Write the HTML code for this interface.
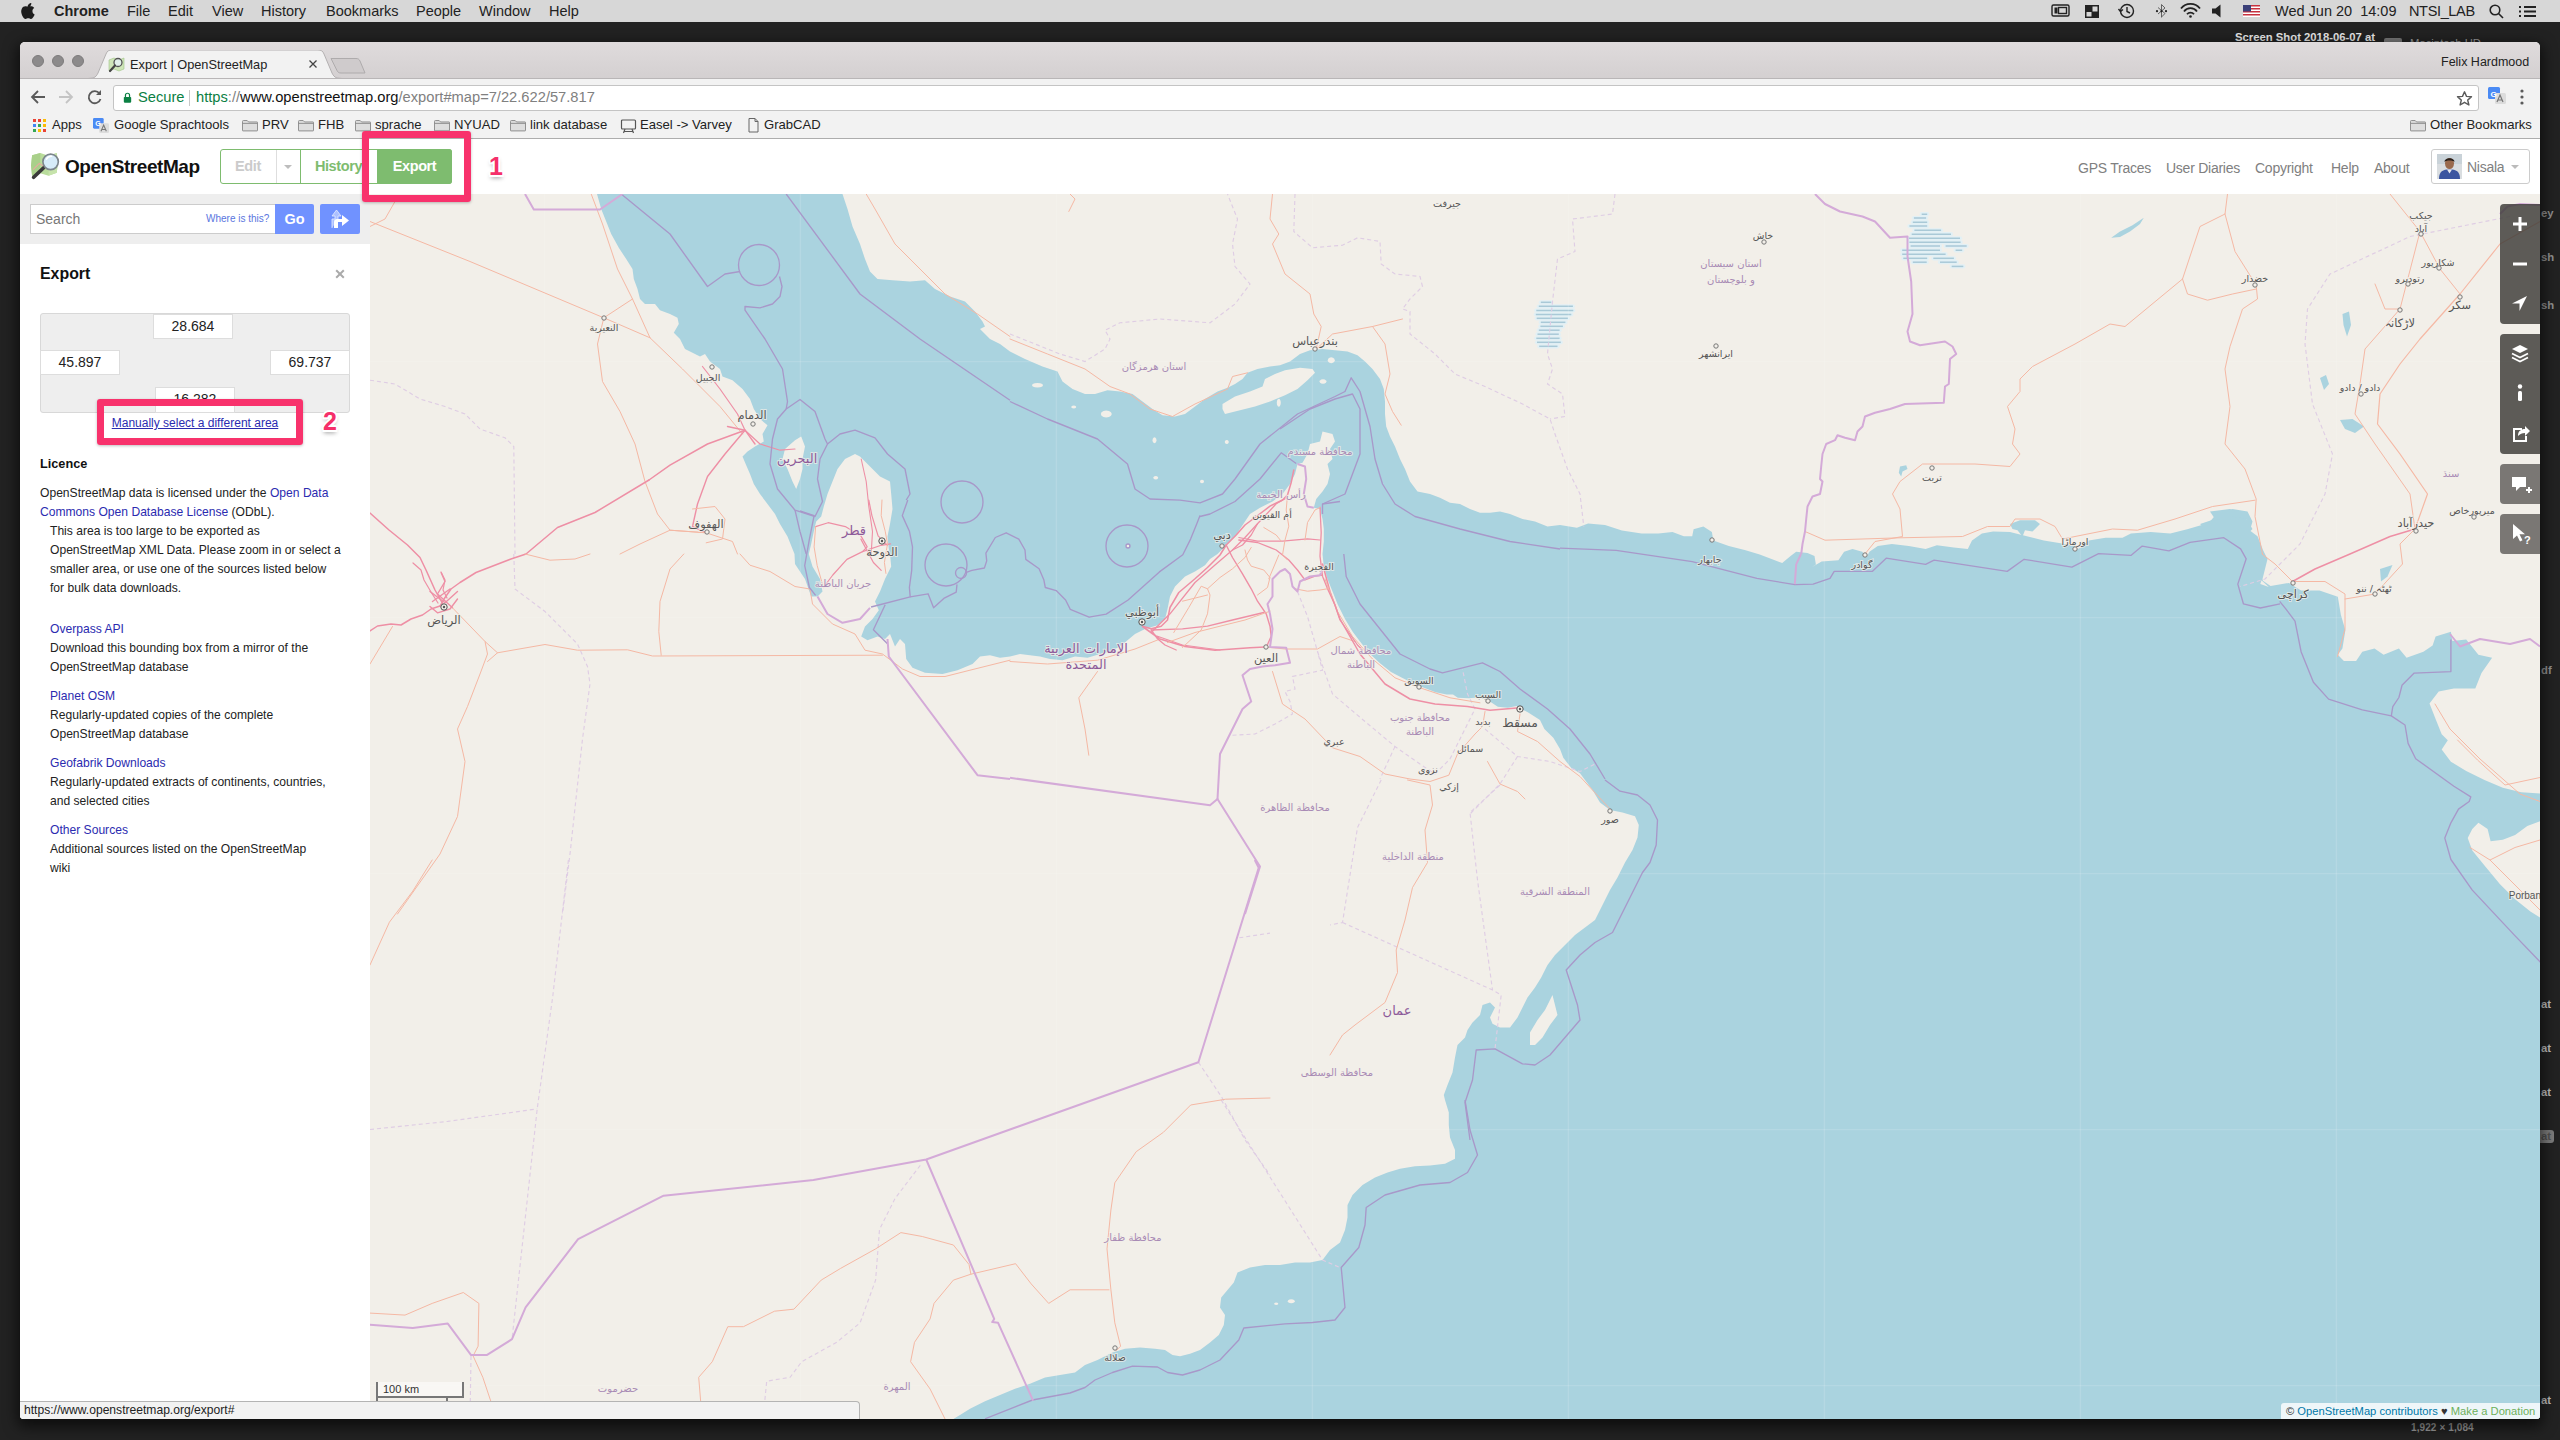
<!DOCTYPE html>
<html lang="en">
<head>
<meta charset="utf-8">
<title>Export | OpenStreetMap</title>
<style>
*{box-sizing:border-box}
html,body{margin:0;padding:0}
body{width:2560px;height:1440px;background:#222222;position:relative;overflow:hidden;font-family:"Liberation Sans","DejaVu Sans",sans-serif;color:#222;-webkit-font-smoothing:antialiased}
.abs{position:absolute}
#menubar{left:0;top:0;width:2560px;height:22px;background:#d7d7d7;font-size:14.5px;line-height:22px;color:#222}
#menubar span{position:absolute;top:0;white-space:nowrap}
#desk span{position:absolute;color:#e8e8e8;font-weight:bold;font-size:11.3px;white-space:nowrap}
#win{left:20px;top:42px;width:2520px;height:1377px;background:#fff;border-radius:5px 5px 4px 4px;overflow:hidden;box-shadow:0 5px 14px 3px rgba(0,0,0,.6)}
#tabstrip{left:0;top:0;width:2520px;height:36px;background:linear-gradient(#dfdbdc,#d4d0d1)}
#toolbar{left:0;top:36px;width:2520px;height:34px;background:#f2f2f2;border-top:1px solid #b9b6b7}
#bmbar{left:0;top:70px;width:2520px;height:27px;background:#f2f2f2;border-bottom:1px solid #adadad;font-size:13.1px;line-height:26px;color:#222}
#bmbar span{position:absolute;top:0;white-space:nowrap}
.folder{position:absolute;top:7px;width:16px;height:12.500px}
#urlbox{left:93px;top:6px;width:2366px;height:26px;background:#fff;border:1px solid #c4c4c4;border-radius:3px;font-size:14.7px;line-height:23px;white-space:nowrap}
#page{left:0;top:97px;width:2520px;height:1280px;background:#fff}
#osmhead{left:0;top:0;width:2520px;height:55px;background:#fff}
.nav a{position:absolute;top:0;font-size:14px;line-height:59px;color:#808080;white-space:nowrap;letter-spacing:-.25px}
#sidebar{left:0;top:55px;width:350px;height:1225px;background:#fff;font-size:12.1px;line-height:19px;color:#222}
#searchbar{left:0;top:0;width:350px;height:50px;background:#eee}
#map{left:350px;top:55px;width:2170px;height:1225px;overflow:hidden;background:#f2efe9}
.lnk{color:#2b2bb0}
.ctl{position:absolute;left:2130px;width:40px;background:rgba(60,58,55,.82);border-radius:4px 0 0 4px}
.ctl.l{background:rgba(95,93,90,.82)}
.ctl svg{position:absolute;left:0}
.inp{position:absolute;background:#fff;border:1px solid #ddd;height:25px;font-size:14px;line-height:23px;text-align:center;color:#222}
.pinkbox{position:absolute;border:7px solid #f8326c;border-radius:3px;box-shadow:0 1px 3px rgba(0,0,0,.25)}
.pinknum{position:absolute;color:#f5306a;font-weight:bold;font-size:25px;line-height:24px;text-shadow:-1.5px -1.5px 0 #fff,1.5px -1.5px 0 #fff,-1.5px 1.5px 0 #fff,1.5px 1.5px 0 #fff,0 -2px 0 #fff,0 2px 0 #fff,2px 0 0 #fff,-2px 0 0 #fff,0 3px 4px rgba(0,0,0,.4)}
</style>
</head>
<body>
<!-- ===== macOS menu bar ===== -->
<div id="menubar" class="abs">
<svg class="abs" style="left:20px;top:2px" width="15" height="17" viewBox="0 0 15 17"><path d="M10.3 4.1c.7-.8 1.1-1.900 1-3-.9 0-2.100.6-2.800 1.400-.6.700-1.100 1.800-1 2.900 1 .1 2.100-.5 2.800-1.300zM12.400 9c0-2.100 1.700-3.100 1.800-3.100-1-1.400-2.500-1.600-3-1.600-1.300-.1-2.500.7-3.100.7-.7 0-1.700-.7-2.700-.7C3.900 4.300 2.600 5.100 1.900 6.400.400 9 1.500 12.800 3 14.900c.7 1 1.500 2.200 2.600 2.100 1-.0 1.400-.7 2.700-.7 1.200 0 1.600.7 2.700.6 1.100 0 1.800-1 2.500-2.100.8-1.200 1.100-2.300 1.100-2.400 0 0-2.200-.8-2.200-3.400z" fill="#1c1c1c"/></svg>
<span style="left:54px;font-weight:bold">Chrome</span>
<span style="left:127px">File</span><span style="left:168px">Edit</span><span style="left:212px">View</span><span style="left:261px">History</span><span style="left:326px">Bookmarks</span><span style="left:416px">People</span><span style="left:479px">Window</span><span style="left:549px">Help</span>
<!-- right status icons -->
<svg class="abs" style="left:2050px;top:2px" width="200" height="18" viewBox="0 0 200 18" fill="none" stroke="#222" stroke-width="1.4">
<rect x="2" y="3" width="17" height="11" rx="1.5"/><rect x="4.500" y="5.500" width="3" height="6" fill="#222" stroke="none"/><rect x="8.500" y="5.500" width="8" height="6"/>
<rect x="35" y="3" width="14" height="13" fill="#222" stroke="none"/><rect x="42.500" y="4.500" width="5" height="5" fill="#d7d7d7" stroke="none"/><rect x="36.500" y="10" width="5" height="4.500" fill="#d7d7d7" stroke="none"/>
<circle cx="77" cy="9" r="6.500"/><path d="M77 5v4.500l3 1.500"/><path d="M68.500 7l2 2.500 2.500-2" />
<path d="M111.500 2.500v13M108 5.500l7 6-3.500 3.500M108 12l7-6-3.500-3.500" stroke-width=".9" stroke="#555"/><circle cx="107" cy="9.200" r="1.100" fill="#222" stroke="none"/><circle cx="111.500" cy="9.200" r="1.100" fill="#222" stroke="none"/><circle cx="116" cy="9.200" r="1.100" fill="#222" stroke="none"/>
<path d="M131 6.500a12 12 0 0 1 19 0" stroke-width="1.800"/><path d="M134 9.500a8 8 0 0 1 13 0" stroke-width="1.800"/><path d="M137 12.300a4.500 4.500 0 0 1 7 0" stroke-width="1.800"/><circle cx="140.500" cy="14.500" r="1.300" fill="#222" stroke="none"/>
<path d="M162 6.500h3.500l5-4v13l-5-4H162z" fill="#222" stroke="none"/>
</svg>
<svg class="abs" style="left:2243px;top:5px" width="17" height="12" viewBox="0 0 17 12"><rect width="17" height="12" fill="#fff"/><g fill="#c8313e"><rect y="0" width="17" height="1.500"/><rect y="3" width="17" height="1.500"/><rect y="6" width="17" height="1.500"/><rect y="9" width="17" height="1.500"/></g><rect width="8" height="6.500" fill="#3a3f78"/></svg>
<span style="left:2275px">Wed Jun 20&nbsp; 14:09</span><span style="left:2409px;letter-spacing:-.35px">NTSI_LAB</span>
<svg class="abs" style="left:2488px;top:3px" width="60" height="17" viewBox="0 0 60 17" fill="none" stroke="#222" stroke-width="1.600"><circle cx="7" cy="7" r="4.800"/><path d="M10.500 10.500l4.500 4.500"/><path d="M36 4h12M36 8.500h12M36 13h12" stroke-width="2"/><path d="M31 4h2M31 8.500h2M31 13h2" stroke-width="2"/></svg>
</div>

<!-- ===== desktop fragments behind window ===== -->
<div id="desk">
<span style="left:2235px;top:31px">Screen Shot 2018-06-07 at</span>
<span style="left:2410px;top:37px;color:#999;font-weight:normal">Macintosh HD</span>
<div class="abs" style="left:2384px;top:38px;width:18px;height:6px;background:#777;border-radius:2px"></div>
<span style="left:2541px;top:207px;color:#8f8f8f">ey</span><span style="left:2541px;top:251px;color:#8f8f8f">sh</span><span style="left:2541px;top:299px;color:#8f8f8f">sh</span>
<span style="left:2541px;top:664px;color:#8f8f8f">df</span><span style="left:2541px;top:998px;color:#bdbdbd">at</span><span style="left:2541px;top:1042px;color:#bdbdbd">at</span><span style="left:2541px;top:1086px;color:#bdbdbd">at</span><span style="left:2540px;top:1130px;color:#505050;background:#7c7c7c;border-radius:0 3px 3px 0;padding:0 3px 1px 1px">at</span><span style="left:2541px;top:1394px;color:#bdbdbd">at</span>
<span style="left:2411px;top:1422px;color:#9a9a9a;font-size:10px;letter-spacing:.1px">1,922 × 1,084</span>
</div>

<!-- ===== Chrome window ===== -->
<div id="win" class="abs">
 <div id="tabstrip" class="abs">
  <div class="abs" style="left:12px;top:13px;width:12px;height:12px;border-radius:6px;background:#8c8a8b;border:1px solid #7d7b7c"></div>
  <div class="abs" style="left:32px;top:13px;width:12px;height:12px;border-radius:6px;background:#8c8a8b;border:1px solid #7d7b7c"></div>
  <div class="abs" style="left:52px;top:13px;width:12px;height:12px;border-radius:6px;background:#8c8a8b;border:1px solid #7d7b7c"></div>
  <svg class="abs" style="left:68px;top:8px" width="290" height="29" viewBox="0 1 290 29">
   <path d="M0 29.500 L5 29 C8 28 9 26 10 24 L18 5 C19 2 21 1 24 1 L230 1 C233 1 235 2 236 5 L244 24 C245 26 246 28 249 29 L254 29.500 Z" fill="#f2f2f2" stroke="#b3b0b1" stroke-width="1"/>
   <rect x="0" y="29" width="290" height="1" fill="#f2f2f2"/>
   <path d="M243 9.500 L268 9.500 C270 9.500 271 10 272 12 L277 24 L253 24 C251 24 250 23.500 249 21.500 Z" fill="#cfcbcc" stroke="#aeabac" stroke-width="1"/>
  </svg>
  <!-- favicon -->
  <svg class="abs" style="left:88px;top:14px" width="17" height="17" viewBox="0 0 17 17"><path d="M1 4l5-2 5 2 5-2v11l-5 2-5-2-5 2z" fill="#cfe6b8" stroke="#9fc487" stroke-width=".6"/><circle cx="10" cy="6.500" r="4" fill="#e9f3ff" fill-opacity=".7" stroke="#555" stroke-width="1.300"/><path d="M7 9.500l-5 5.500" stroke="#444" stroke-width="2.200" stroke-linecap="round"/></svg>
  <div class="abs" style="left:110px;top:15px;font-size:12.750px;line-height:16px;color:#222;white-space:nowrap">Export | OpenStreetMap</div>
  <svg class="abs" style="left:288px;top:17px" width="10" height="10" viewBox="0 0 10 10"><path d="M1.500 1.500l7 7M8.500 1.500l-7 7" stroke="#444" stroke-width="1.300"/></svg>
  <div class="abs" style="left:2421px;top:12px;font-size:12.500px;line-height:16px;color:#222;white-space:nowrap">Felix Hardmood</div>
 </div>
 <div id="toolbar" class="abs">
  <svg class="abs" style="left:8px;top:8px" width="80" height="20" viewBox="0 0 80 20" fill="none" stroke-width="1.800">
   <path d="M17 10H4M10 4l-6 6 6 6" stroke="#5a5a5a"/>
   <path d="M31 10h13M38 4l6 6-6 6" stroke="#c4c4c4"/>
   <path d="M71.500 6.500A6 6 0 1 0 72.500 12" stroke="#5a5a5a"/><path d="M73 3v5h-5z" fill="#5a5a5a" stroke="none"/>
  </svg>
  <div id="urlbox" class="abs">
   <svg class="abs" style="left:9px;top:6px" width="9" height="11.500" viewBox="0 0 11 14"><rect x="1" y="6" width="9" height="7" rx="1" fill="#0b8043"/><path d="M3 6V4a2.500 2.500 0 0 1 5 0v2" fill="none" stroke="#0b8043" stroke-width="1.500"/></svg>
   <span class="abs" style="left:24px;top:0;color:#0b8043">Secure</span>
   <div class="abs" style="left:75px;top:4px;width:1px;height:16px;background:#c8c8c8"></div>
   <span class="abs" style="left:82px;top:0"><span style="color:#0b8043">https</span><span style="color:#808080">://</span><span style="color:#111">www.openstreetmap.org</span><span style="color:#808080">/export#map=7/22.622/57.817</span></span>
   <svg class="abs" style="left:2342px;top:4px" width="17" height="17" viewBox="0 0 17 17"><path d="M8.500 1.800l2 4.600 5 .4-3.800 3.300 1.200 4.900-4.400-2.700-4.400 2.700 1.200-4.900L1.500 6.800l5-.4z" fill="none" stroke="#5a5a5a" stroke-width="1.400" stroke-linejoin="round"/></svg>
  </div>
  <svg class="abs" style="left:2468px;top:8px" width="18" height="18" viewBox="0 0 18 18"><rect x="0" y="0" width="12" height="12" rx="1.500" fill="#4a8af4"/><rect x="7" y="6" width="11" height="11" rx="1.500" fill="#dcdcdc"/><path d="M9 15l3-7 3 7M10 13h4" stroke="#777" fill="none" stroke-width="1.200"/><text x="2.500" y="9.500" font-size="8" font-weight="bold" fill="#fff" font-family="'Liberation Sans',sans-serif">G</text></svg>
  <svg class="abs" style="left:2499px;top:9px" width="6" height="18" viewBox="0 0 6 18"><circle cx="3" cy="3" r="1.600" fill="#5a5a5a"/><circle cx="3" cy="9" r="1.600" fill="#5a5a5a"/><circle cx="3" cy="15" r="1.600" fill="#5a5a5a"/></svg>
 </div>
 <div id="bmbar" class="abs">
  <svg class="abs" style="left:13px;top:7px" width="14" height="14" viewBox="0 0 14 14"><g><rect x="0" y="0" width="3" height="3" fill="#ea4335"/><rect x="5" y="0" width="3" height="3" fill="#ea4335"/><rect x="10" y="0" width="3" height="3" fill="#fbbc05"/><rect x="0" y="5" width="3" height="3" fill="#4285f4"/><rect x="5" y="5" width="3" height="3" fill="#34a853"/><rect x="10" y="5" width="3" height="3" fill="#fbbc05"/><rect x="0" y="10" width="3" height="3" fill="#34a853"/><rect x="5" y="10" width="3" height="3" fill="#fbbc05"/><rect x="10" y="10" width="3" height="3" fill="#ea4335"/></g></svg>
  <span style="left:32px">Apps</span>
  <svg class="abs" style="left:73px;top:6px" width="16" height="16" viewBox="0 0 18 18"><rect x="0" y="0" width="12" height="12" rx="1.500" fill="#4a8af4"/><rect x="7" y="6" width="11" height="11" rx="1.500" fill="#dcdcdc"/><path d="M9 15l3-7 3 7M10 13h4" stroke="#777" fill="none" stroke-width="1.200"/><text x="2.500" y="9.500" font-size="8" font-weight="bold" fill="#fff" font-family="'Liberation Sans',sans-serif">G</text></svg>
  <span style="left:94px">Google Sprachtools</span>
  <svg class="folder" style="left:222px" viewBox="0 0 17 13"><path d="M.5 2.500a1 1 0 0 1 1-1h4l1.500 1.500h9a.5.5 0 0 1 .5.500V12a.5.5 0 0 1-.5.500h-15a.5.500 0 0 1-.5-.5z" fill="#dedede" stroke="#8a8a8a"/><path d="M.5 4.500h16" stroke="#8a8a8a"/></svg><span style="left:242px">PRV</span>
  <svg class="folder" style="left:278px" viewBox="0 0 17 13"><path d="M.5 2.500a1 1 0 0 1 1-1h4l1.500 1.500h9a.5.5 0 0 1 .5.500V12a.5.5 0 0 1-.5.500h-15a.5.500 0 0 1-.5-.5z" fill="#dedede" stroke="#8a8a8a"/><path d="M.5 4.500h16" stroke="#8a8a8a"/></svg><span style="left:298px">FHB</span>
  <svg class="folder" style="left:335px" viewBox="0 0 17 13"><path d="M.5 2.500a1 1 0 0 1 1-1h4l1.500 1.500h9a.5.5 0 0 1 .5.500V12a.5.5 0 0 1-.5.500h-15a.5.500 0 0 1-.5-.5z" fill="#dedede" stroke="#8a8a8a"/><path d="M.5 4.500h16" stroke="#8a8a8a"/></svg><span style="left:355px">sprache</span>
  <svg class="folder" style="left:414px" viewBox="0 0 17 13"><path d="M.5 2.500a1 1 0 0 1 1-1h4l1.500 1.500h9a.5.5 0 0 1 .5.500V12a.5.5 0 0 1-.5.500h-15a.5.500 0 0 1-.5-.5z" fill="#dedede" stroke="#8a8a8a"/><path d="M.5 4.500h16" stroke="#8a8a8a"/></svg><span style="left:434px">NYUAD</span>
  <svg class="folder" style="left:490px" viewBox="0 0 17 13"><path d="M.5 2.500a1 1 0 0 1 1-1h4l1.500 1.500h9a.5.5 0 0 1 .5.500V12a.5.5 0 0 1-.5.500h-15a.5.500 0 0 1-.5-.5z" fill="#dedede" stroke="#8a8a8a"/><path d="M.5 4.500h16" stroke="#8a8a8a"/></svg><span style="left:510px">link database</span>
  <svg class="abs" style="left:600px;top:6px" width="17" height="16" viewBox="0 0 17 16" fill="none" stroke="#555" stroke-width="1.200"><rect x="1.500" y="2" width="14" height="9" rx="1"/><path d="M5 11l-1.500 4M12 11l1.500 4M4 13.500h9"/></svg><span style="left:620px">Easel -&gt; Varvey</span>
  <svg class="abs" style="left:728px;top:6px" width="11" height="15" viewBox="0 0 11 15" fill="none" stroke="#666" stroke-width="1"><path d="M1 .5h6l3 3v10.500h-9z"/><path d="M7 .5v3h3"/></svg><span style="left:744px">GrabCAD</span>
  <svg class="folder" style="left:2390px" viewBox="0 0 17 13"><path d="M.5 2.500a1 1 0 0 1 1-1h4l1.500 1.500h9a.5.5 0 0 1 .5.500V12a.5.5 0 0 1-.5.500h-15a.5.500 0 0 1-.5-.5z" fill="#dedede" stroke="#8a8a8a"/><path d="M.5 4.500h16" stroke="#8a8a8a"/></svg><span style="left:2410px">Other Bookmarks</span>
 </div>

 <!-- ===== page ===== -->
 <div id="page" class="abs">
  <div id="osmhead" class="abs">
   <svg class="abs" style="left:9px;top:11px" width="35" height="35" viewBox="0 0 34 34"><path d="M3 5l8-2 8 2.500 8-2.500 1 9-1 10-8 3-8-2.500-8 2.500-1-10z" fill="#b9dc9c"/><path d="M3 5l8-2v19.500l-8 2.500-1-10z" fill="#a9d08a"/><path d="M19 5.500l8-2.500 1 9-1 10-8 3z" fill="#c6e3ab"/><path d="M4 19l6-6 7 5 9-9" stroke="#e9a9a0" stroke-width="1" fill="none"/><path d="M14 17.500l-9.500 9" stroke="#3a3a3a" stroke-width="3.600" stroke-linecap="round"/><circle cx="21" cy="11.500" r="7.500" fill="#d6ebf8" stroke="#7d868c" stroke-width="1.600"/><path d="M17 9a5 5 0 0 1 5-3" stroke="#fff" stroke-width="1.500" fill="none" stroke-linecap="round"/></svg>
   <div class="abs" style="left:45px;top:16px;font-size:19px;line-height:24px;font-weight:bold;color:#111;letter-spacing:-.45px;white-space:nowrap">OpenStreetMap</div>
   <div class="abs" style="left:200px;top:10px;width:232px;height:35px;border:1px solid #7ebc6f;border-radius:3px;background:#fff"></div>
   <div class="abs" style="left:256px;top:10px;width:1px;height:33px;margin-top:1px;background:#dedede"></div>
   <div class="abs" style="left:280px;top:10px;width:1px;height:35px;background:#7ebc6f"></div>
   <div class="abs" style="left:357px;top:10px;width:75px;height:35px;background:#7ebc6f;border-radius:0 3px 3px 0"></div>
   <div class="abs" style="left:200px;top:10px;width:56px;height:35px;line-height:35px;text-align:center;font-size:14.500px;font-weight:bold;color:#cbcbcb;letter-spacing:-.4px">Edit</div>
   <div class="abs" style="left:264px;top:26px;width:0;height:0;border-left:4px solid transparent;border-right:4px solid transparent;border-top:4px solid #bdbdbd"></div>
   <div class="abs" style="left:280px;top:10px;width:77px;height:35px;line-height:35px;text-align:center;font-size:14.500px;font-weight:bold;color:#7ebc6f;letter-spacing:-.4px">History</div>
   <div class="abs" style="left:357px;top:10px;width:75px;height:35px;line-height:35px;text-align:center;font-size:14.500px;font-weight:bold;color:#fff;letter-spacing:-.4px">Export</div>
   <div class="nav">
    <a style="left:2058px">GPS Traces</a><a style="left:2146px">User Diaries</a><a style="left:2235px">Copyright</a><a style="left:2311px">Help</a><a style="left:2354px">About</a>
   </div>
   <div class="abs" style="left:2411px;top:10px;width:99px;height:35px;border:1px solid #ccc;border-radius:3px"></div>
   <svg class="abs" style="left:2417px;top:15px" width="25" height="25" viewBox="0 0 25 25"><rect width="25" height="25" fill="#d9dde0"/><rect x="0" y="0" width="25" height="10" fill="#c9d2d8"/><ellipse cx="12.500" cy="9.500" rx="4.500" ry="5.500" fill="#9a6a4d"/><path d="M7.500 8c0-5 10-5 10 0-1-2-9-2-10 0z" fill="#2a211c"/><path d="M2 25c0-8 4-9.500 10.500-9.500S23 17 23 25z" fill="#3b55a0"/><path d="M10 15.500l2.500 4 2.500-4z" fill="#e8e8ee"/></svg>
   <div class="abs" style="left:2447px;top:10px;height:35px;line-height:37px;font-size:14px;letter-spacing:-.25px;color:#808080">Nisala</div>
   <div class="abs" style="left:2491px;top:26px;width:0;height:0;border-left:4px solid transparent;border-right:4px solid transparent;border-top:4px solid #bbb"></div>
  </div>

  <div id="sidebar" class="abs">
   <div id="searchbar" class="abs">
    <div class="abs" style="left:10px;top:10px;width:246px;height:30px;background:#fff;border:1px solid #ccc;border-right:0"></div>
    <div class="abs" style="left:16px;top:10px;line-height:30px;font-size:14px;color:#777">Search</div>
    <div class="abs" style="left:186px;top:10px;line-height:30px;font-size:10px;color:#5a76e0;white-space:nowrap">Where is this?</div>
    <div class="abs" style="left:255px;top:10px;width:39px;height:30px;background:#7092ff;color:#fff;font-weight:bold;font-size:14.500px;line-height:30px;text-align:center;border-radius:0 2px 2px 0">Go</div>
    <div class="abs" style="left:300px;top:10px;width:40px;height:30px;background:#7092ff;border-radius:2px"></div>
    <svg class="abs" style="left:309px;top:14px" width="22" height="21" viewBox="0 0 22 21"><path d="M3 20v-9h3V8L3 8l4.500-6L12 8H9v3" fill="#dfe6ff" fill-opacity=".55" stroke="#e6ecff" stroke-width="1" stroke-opacity=".8"/><path d="M5 20v-6c0-2 1-3 3-3h5V7l7 5.500-7 5.500v-4H9v6z" fill="#fff"/></svg>
   </div>
   <div class="abs" style="left:20px;top:69px;font-size:15.900px;line-height:22px;font-weight:bold;color:#111">Export</div>
   <svg class="abs" style="left:315px;top:75px" width="10" height="10" viewBox="0 0 10 10"><path d="M1.200 1.200l7.600 7.600M8.800 1.200l-7.600 7.600" stroke="#aaa" stroke-width="2"/></svg>
   <div class="abs" style="left:20px;top:119px;width:310px;height:100px;background:#eee;border:1px solid #d8d8d8;border-radius:3px"></div>
   <div class="inp" style="left:133px;top:120px;width:80px">28.684</div>
   <div class="inp" style="left:20px;top:156px;width:80px">45.897</div>
   <div class="inp" style="left:250px;top:156px;width:80px">69.737</div>
   <div class="inp" style="left:135px;top:193px;width:80px;height:26px">16.282</div>
   <div class="abs" style="left:20px;top:220px;width:310px;text-align:center;font-size:12px;line-height:19px"><span class="lnk" style="text-decoration:underline;position:relative;left:0">Manually select a different area</span></div>
   <div class="abs" style="left:20px;top:261px;font-size:12.700px;font-weight:bold;line-height:18px;color:#111">Licence</div>
   <div class="abs" style="left:20px;top:290px;width:320px;white-space:nowrap">OpenStreetMap data is licensed under the <span class="lnk">Open Data</span><br><span class="lnk">Commons Open Database License</span> (ODbL).</div>
   <div class="abs" style="left:30px;top:328px;width:310px;white-space:nowrap">This area is too large to be exported as<br>OpenStreetMap XML Data. Please zoom in or select a<br>smaller area, or use one of the sources listed below<br>for bulk data downloads.</div>
   <div class="abs" style="left:30px;top:426px;white-space:nowrap"><span class="lnk">Overpass API</span><br>Download this bounding box from a mirror of the<br>OpenStreetMap database</div>
   <div class="abs" style="left:30px;top:493px;white-space:nowrap"><span class="lnk">Planet OSM</span><br>Regularly-updated copies of the complete<br>OpenStreetMap database</div>
   <div class="abs" style="left:30px;top:560px;white-space:nowrap"><span class="lnk">Geofabrik Downloads</span><br>Regularly-updated extracts of continents, countries,<br>and selected cities</div>
   <div class="abs" style="left:30px;top:627px;white-space:nowrap"><span class="lnk">Other Sources</span><br>Additional sources listed on the OpenStreetMap<br>wiki</div>
  </div>

  <div id="map" class="abs">
<svg width="2170" height="1226" viewBox="370 194 2170 1226" style="position:absolute;left:0;top:0;display:block">
<rect x="370" y="194" width="2170" height="1226" fill="#f2efe9"/>
<path d="M597.0 194.0 L601.2 209.0 L606.2 221.5 L611.2 234.0 L618.8 247.8 L626.2 259.0 L632.5 269.0 L633.8 279.0 L637.5 289.0 L640.0 299.0 L645.0 304.0 L655.0 304.0 L660.0 310.2 L670.0 314.0 L677.5 317.8 L678.8 324.0 L673.8 332.8 L680.0 339.0 L685.0 349.0 L695.0 354.0 L700.0 356.5 L705.0 354.0 L710.0 361.5 L720.0 369.0 L722.5 376.5 L732.5 380.2 L742.5 389.0 L750.0 399.0 L753.8 409.0 L760.0 419.0 L767.5 425.2 L762.5 434.0 L763.8 441.5 L755.0 446.5 L747.5 451.5 L742.5 456.5 L746.2 465.2 L750.0 474.0 L753.8 484.0 L760.0 494.0 L767.5 504.0 L775.0 514.0 L780.0 524.0 L787.5 536.5 L792.5 549.0 L794.5 554.0 L795.0 564.0 L805.0 579.0 L811.2 596.5 L817.5 596.5 L822.5 591.5 L820.0 579.0 L812.5 566.5 L808.8 554.0 L811.2 544.0 L813.8 531.5 L816.2 521.5 L821.2 516.5 L823.8 506.5 L827.5 494.0 L832.5 481.5 L837.5 469.0 L845.0 459.0 L855.0 454.0 L860.0 456.5 L870.0 466.5 L880.0 476.5 L890.0 481.5 L891.2 494.0 L892.5 509.0 L890.0 524.0 L887.5 536.5 L888.8 549.0 L890.0 554.0 L891.2 566.5 L885.0 579.0 L880.0 591.5 L875.0 601.5 L878.8 610.2 L872.5 619.0 L865.0 626.5 L861.2 636.5 L867.5 640.2 L877.5 636.5 L885.0 639.0 L890.0 634.0 L895.0 646.5 L900.0 639.0 L905.0 644.0 L906.2 659.0 L912.5 667.8 L925.0 672.8 L942.5 674.0 L957.5 670.2 L972.5 664.0 L980.0 656.5 L990.0 655.2 L1000.0 657.8 L1010.0 656.5 L1020.0 654.0 L1030.0 655.2 L1040.0 656.5 L1050.0 659.0 L1062.5 660.2 L1075.0 656.5 L1087.5 657.8 L1100.0 654.0 L1110.0 651.5 L1120.0 646.5 L1127.5 640.2 L1135.0 634.0 L1145.0 629.0 L1157.5 625.2 L1165.0 619.0 L1167.5 609.0 L1170.0 596.5 L1175.0 586.5 L1185.0 576.5 L1195.0 571.5 L1205.0 565.2 L1210.0 559.0 L1217.5 554.0 L1225.0 546.5 L1230.0 541.5 L1235.0 536.5 L1240.0 529.0 L1245.0 521.5 L1250.0 514.0 L1260.0 507.8 L1272.5 501.5 L1282.5 494.0 L1290.0 484.0 L1295.0 474.0 L1297.5 464.0 L1302.5 462.8 L1307.5 454.0 L1310.0 444.0 L1320.0 441.5 L1322.5 431.5 L1332.5 434.0 L1335.0 441.5 L1330.0 449.0 L1332.5 459.0 L1327.5 464.0 L1330.0 474.0 L1327.5 484.0 L1322.5 491.5 L1316.2 499.0 L1313.8 507.8 L1320.0 509.0 L1322.5 519.0 L1323.8 529.0 L1323.8 541.5 L1322.5 554.0 L1323.8 566.5 L1327.5 579.0 L1332.5 591.5 L1337.5 604.0 L1345.0 619.0 L1352.5 631.5 L1360.0 641.5 L1370.0 654.0 L1380.0 663.3 L1391.0 672.0 L1402.0 677.8 L1413.0 683.3 L1424.0 687.8 L1435.6 692.2 L1446.7 694.4 L1453.0 694.4 L1457.8 697.8 L1469.0 698.3 L1480.0 697.2 L1491.0 702.2 L1497.8 706.7 L1507.8 707.8 L1516.7 706.0 L1521.1 708.9 L1527.8 712.2 L1540.0 720.0 L1544.4 728.9 L1553.3 737.8 L1560.0 748.9 L1563.3 757.8 L1571.1 767.8 L1580.0 773.3 L1585.0 780.0 L1592.5 790.0 L1600.0 802.5 L1610.0 810.0 L1622.5 812.5 L1635.0 816.2 L1638.8 825.0 L1637.5 837.5 L1632.5 850.0 L1625.0 862.5 L1617.5 877.5 L1610.0 890.0 L1602.5 905.0 L1595.0 920.0 L1585.0 927.5 L1575.0 935.0 L1565.0 945.0 L1555.0 955.0 L1547.5 965.0 L1541.2 977.5 L1535.0 987.5 L1527.5 997.5 L1522.5 1007.5 L1517.5 1017.5 L1510.0 1027.5 L1500.0 1027.5 L1492.5 1023.8 L1490.0 1017.5 L1495.0 1007.5 L1490.0 1002.5 L1482.5 1005.0 L1480.0 1015.0 L1472.5 1022.5 L1467.5 1030.0 L1465.0 1037.5 L1457.5 1045.0 L1455.0 1057.5 L1452.5 1072.5 L1447.5 1085.0 L1443.8 1095.0 L1445.0 1100.0 L1448.8 1112.5 L1448.8 1125.0 L1450.0 1137.5 L1455.0 1150.0 L1455.0 1158.8 L1445.0 1163.8 L1430.0 1165.5 L1415.0 1166.2 L1400.0 1168.8 L1387.5 1172.5 L1375.0 1177.5 L1362.5 1185.0 L1352.5 1195.0 L1347.5 1205.0 L1347.5 1217.5 L1345.0 1230.0 L1340.0 1242.5 L1330.0 1250.0 L1322.5 1260.0 L1310.0 1262.5 L1295.0 1262.5 L1280.0 1265.0 L1265.0 1265.0 L1250.0 1267.5 L1237.5 1272.5 L1233.8 1282.5 L1227.5 1290.0 L1221.2 1297.5 L1220.0 1307.5 L1225.0 1315.0 L1223.8 1325.0 L1218.8 1335.0 L1210.0 1342.5 L1200.0 1350.0 L1190.0 1353.8 L1180.0 1356.2 L1172.5 1355.0 L1165.0 1350.0 L1155.0 1348.8 L1140.0 1347.5 L1125.0 1348.8 L1112.5 1352.5 L1097.5 1360.0 L1085.0 1365.0 L1075.0 1372.5 L1060.0 1375.0 L1045.0 1377.5 L1030.0 1383.8 L1015.0 1388.8 L1000.0 1395.0 L985.0 1401.2 L970.0 1408.8 L960.0 1415.0 L953.8 1418.8 L954.0 1420.0 L2542.0 1420.0 L2542.6 919.1 L2530.4 911.5 L2515.1 899.3 L2499.8 884.0 L2484.5 865.6 L2472.3 850.4 L2467.7 838.1 L2472.3 829.0 L2478.4 822.8 L2487.6 829.0 L2490.6 841.2 L2502.8 839.7 L2515.1 835.1 L2527.3 825.9 L2542.6 820.4 L2542.6 793.8 L2521.2 792.3 L2502.8 787.7 L2484.5 780.1 L2466.2 770.9 L2450.9 761.7 L2441.7 749.5 L2447.8 740.3 L2441.7 734.2 L2435.6 718.9 L2429.5 703.6 L2438.7 691.4 L2453.9 688.4 L2475.3 688.4 L2481.5 673.1 L2492.1 657.8 L2478.4 654.7 L2466.2 639.5 L2452.4 641.0 L2450.9 631.8 L2435.6 636.4 L2432.6 645.6 L2423.4 651.7 L2406.6 657.8 L2398.9 648.6 L2383.6 654.7 L2374.5 648.6 L2362.3 651.7 L2356.1 660.9 L2343.9 660.9 L2337.8 654.7 L2342.4 648.6 L2345.4 630.3 L2340.9 615.0 L2337.8 596.7 L2319.5 590.6 L2301.1 590.6 L2288.9 582.9 L2270.6 586.0 L2262.9 580.8 L2262.5 579.0 L2267.5 559.0 L2260.0 544.0 L2247.5 534.0 L2252.5 529.0 L2245.0 516.5 L2230.0 509.0 L2210.0 511.5 L2215.0 519.0 L2200.0 524.0 L2268.8 586.9 L2260.3 584.1 L2263.1 575.6 L2265.9 564.4 L2263.1 550.3 L2257.5 536.2 L2246.2 527.8 L2229.4 522.2 L2206.9 523.6 L2187.2 529.2 L2170.3 533.4 L2150.6 532.0 L2130.9 533.4 L2122.5 537.7 L2105.6 537.7 L2088.8 540.5 L2080.3 547.5 L2070.5 553.7 L2077.5 551.7 L2074.7 546.1 L2060.6 543.3 L2043.8 540.5 L2026.9 536.2 L2010.0 532.0 L1993.1 531.5 L1981.9 533.4 L1972.0 540.5 L1967.8 548.9 L1953.8 547.5 L1936.9 545.2 L1925.6 548.9 L1908.8 546.1 L1891.9 544.1 L1877.8 546.1 L1869.4 551.7 L1866.6 557.3 L1862.3 551.7 L1852.5 548.9 L1844.1 551.7 L1838.4 560.2 L1821.6 561.6 L1811.7 567.2 L1815.9 564.4 L1814.5 555.9 L1807.5 553.1 L1796.2 551.7 L1790.6 555.9 L1782.2 563.0 L1770.9 558.8 L1759.7 554.5 L1745.6 550.3 L1728.8 546.1 L1713.3 540.5 L1711.9 532.0 L1703.4 526.4 L1693.6 529.2 L1692.2 536.2 L1683.8 536.2 L1672.5 532.0 L1658.4 533.4 L1641.6 533.4 L1621.9 530.6 L1605.0 525.0 L1588.1 523.6 L1576.9 527.8 L1560.0 525.0 L1547.5 526.5 L1535.0 521.5 L1522.5 519.0 L1510.0 514.0 L1500.0 511.5 L1490.0 512.8 L1480.0 512.8 L1470.0 509.0 L1460.0 504.0 L1450.0 502.8 L1440.0 497.8 L1430.0 494.0 L1417.5 491.5 L1410.0 481.5 L1405.0 469.0 L1400.0 459.0 L1395.0 446.5 L1390.0 436.5 L1386.2 426.5 L1385.0 414.0 L1385.0 401.5 L1383.8 389.0 L1380.0 379.0 L1372.5 369.0 L1365.0 361.5 L1357.5 355.2 L1347.5 351.5 L1335.0 350.2 L1322.5 349.0 L1310.0 350.2 L1300.0 354.0 L1290.0 361.5 L1280.0 365.2 L1270.0 366.5 L1257.5 369.0 L1247.5 372.8 L1242.5 379.0 L1235.0 384.0 L1227.5 387.8 L1217.5 391.5 L1205.0 399.0 L1195.0 406.5 L1185.0 414.0 L1175.0 416.5 L1162.5 415.2 L1152.5 409.0 L1142.5 401.5 L1132.5 394.0 L1120.0 391.5 L1107.5 390.2 L1095.0 394.0 L1085.0 394.0 L1072.5 389.0 L1062.5 381.5 L1057.5 371.5 L1042.5 366.5 L1025.0 359.0 L1010.0 351.5 L1010.0 351.5 L1000.0 344.0 L990.0 339.0 L980.0 329.0 L985.0 326.5 L982.5 321.5 L975.0 311.5 L965.0 301.5 L950.0 296.5 L935.0 289.0 L925.0 280.2 L910.0 281.5 L892.5 280.2 L877.5 279.0 L870.0 271.5 L865.0 259.0 L860.0 244.0 L852.5 226.5 L847.5 209.0 L842.5 194.0 L840.0 192.0 L596.0 192.0Z" fill="#aad3df"/>
<path d="M785.0 449.0 L795.0 440.2 L801.2 436.5 L805.0 446.5 L802.5 459.0 L802.5 469.0 L800.0 479.0 L796.2 489.0 L792.5 481.5 L787.5 469.0 L782.5 459.0Z" fill="#f2efe9"/>
<path d="M1222.5 404.0 L1235.0 396.5 L1250.0 391.5 L1262.5 386.5 L1265.0 379.0 L1275.0 374.0 L1285.0 370.2 L1300.0 367.8 L1312.5 369.0 L1315.0 372.8 L1307.5 380.2 L1297.5 389.0 L1285.0 395.2 L1270.0 401.5 L1255.0 406.5 L1240.0 410.2 L1225.0 414.0 L1222.5 409.0Z" fill="#f2efe9"/>
<path d="M1552.5 995.0 L1555.0 1005.0 L1557.5 1015.0 L1550.0 1025.0 L1542.5 1037.5 L1535.0 1045.0 L1530.0 1045.0 L1530.0 1032.5 L1537.5 1020.0 L1545.0 1010.0 L1550.0 1000.0Z" fill="#f2efe9"/>
<path d="M1043.0 385.2 L1042.3 386.4 L1040.2 387.2 L1037.5 387.5 L1034.8 387.2 L1032.7 386.4 L1032.0 385.2 L1032.7 384.1 L1034.8 383.3 L1037.5 383.0 L1040.2 383.3 L1042.3 384.1Z" fill="#f2efe9"/>
<path d="M1111.8 414.0 L1111.0 415.8 L1109.0 417.0 L1106.2 417.5 L1103.5 417.0 L1101.5 415.8 L1100.8 414.0 L1101.5 412.2 L1103.5 411.0 L1106.2 410.5 L1109.0 411.0 L1111.0 412.2Z" fill="#f2efe9"/>
<path d="M1334.8 360.2 L1334.3 361.8 L1333.0 362.8 L1331.2 363.2 L1329.5 362.8 L1328.2 361.8 L1327.8 360.2 L1328.2 358.8 L1329.5 357.7 L1331.2 357.2 L1333.0 357.7 L1334.3 358.8Z" fill="#f2efe9"/>
<path d="M1326.5 381.5 L1326.0 382.6 L1324.8 383.4 L1323.0 383.8 L1321.2 383.4 L1320.0 382.6 L1319.5 381.5 L1320.0 380.4 L1321.2 379.6 L1323.0 379.2 L1324.8 379.6 L1326.0 380.4Z" fill="#f2efe9"/>
<path d="M1156.5 440.2 L1156.2 441.8 L1155.5 442.8 L1154.5 443.2 L1153.5 442.8 L1152.8 441.8 L1152.5 440.2 L1152.8 438.8 L1153.5 437.7 L1154.5 437.2 L1155.5 437.7 L1156.2 438.8Z" fill="#f2efe9"/>
<path d="M1228.8 442.0 L1228.5 443.0 L1227.8 443.7 L1226.8 444.0 L1225.8 443.7 L1225.0 443.0 L1224.8 442.0 L1225.0 441.0 L1225.8 440.3 L1226.8 440.0 L1227.8 440.3 L1228.5 441.0Z" fill="#f2efe9"/>
<path d="M1158.2 477.8 L1157.9 478.6 L1157.0 479.3 L1155.8 479.5 L1154.5 479.3 L1153.6 478.6 L1153.2 477.8 L1153.6 476.9 L1154.5 476.2 L1155.8 476.0 L1157.0 476.2 L1157.9 476.9Z" fill="#f2efe9"/>
<path d="M1204.0 481.5 L1203.7 482.4 L1203.0 483.0 L1202.0 483.2 L1201.0 483.0 L1200.3 482.4 L1200.0 481.5 L1200.3 480.6 L1201.0 480.0 L1202.0 479.8 L1203.0 480.0 L1203.7 480.6Z" fill="#f2efe9"/>
<path d="M1280.8 402.8 L1280.5 404.8 L1279.8 406.2 L1278.8 406.8 L1277.8 406.2 L1277.0 404.8 L1276.8 402.8 L1277.0 400.8 L1277.8 399.3 L1278.8 398.8 L1279.8 399.3 L1280.5 400.8Z" fill="#f2efe9"/>
<path d="M1076.2 407.0 L1075.9 407.8 L1075.0 408.3 L1073.8 408.5 L1072.5 408.3 L1071.6 407.8 L1071.2 407.0 L1071.6 406.2 L1072.5 405.7 L1073.8 405.5 L1075.0 405.7 L1075.9 406.2Z" fill="#f2efe9"/>
<path d="M1129.2 546.0 L1129.0 546.9 L1128.4 547.5 L1127.5 547.8 L1126.6 547.5 L1126.0 546.9 L1125.8 546.0 L1126.0 545.1 L1126.6 544.5 L1127.5 544.2 L1128.4 544.5 L1129.0 545.1Z" fill="#f2efe9"/>
<path d="M1294.8 1301.2 L1294.3 1302.2 L1293.0 1303.0 L1291.2 1303.2 L1289.5 1303.0 L1288.2 1302.2 L1287.8 1301.2 L1288.2 1300.2 L1289.5 1299.5 L1291.2 1299.2 L1293.0 1299.5 L1294.3 1300.2Z" fill="#f2efe9"/>
<path d="M1278.2 1303.8 L1278.0 1304.4 L1277.2 1304.8 L1276.2 1305.0 L1275.2 1304.8 L1274.5 1304.4 L1274.2 1303.8 L1274.5 1303.1 L1275.2 1302.7 L1276.2 1302.5 L1277.2 1302.7 L1278.0 1303.1Z" fill="#f2efe9"/>
<path d="M2010.0 524.0 L2020.0 520.2 L2035.0 520.2 L2040.0 524.0 L2032.5 531.5 L2025.0 530.2 L2022.5 536.5 L2017.5 530.2 L2012.5 529.0Z" fill="#aad3df"/>
<path d="M2210.0 521.5 L2217.5 512.8 L2232.5 509.0 L2247.5 511.5 L2252.5 521.5 L2250.0 530.2 L2246.2 519.0 L2232.5 516.5 L2220.0 519.0Z" fill="#aad3df"/>
<path d="M2111.2 237.8 L2120.0 231.5 L2132.5 225.2 L2143.8 217.8 L2140.0 224.0 L2130.0 231.5 L2120.0 237.0Z" fill="#aad3df"/>
<path d="M2342.5 314.0 L2349.0 311.5 L2351.0 325.0 L2347.0 336.5 L2343.5 325.0Z" fill="#aad3df"/>
<path d="M2320.0 378.0 L2326.0 375.0 L2329.0 384.0 L2324.0 390.0Z" fill="#aad3df"/>
<path d="M2340.0 420.0 L2352.5 419.0 L2364.0 426.5 L2355.0 433.0 L2345.0 429.0Z" fill="#aad3df"/>
<path d="M2380.0 569.0 L2392.5 565.0 L2387.5 576.5 L2381.0 581.5Z" fill="#aad3df"/>
<path d="M1900.0 466.5 L1906.2 465.2 L1907.5 469.0 L1902.5 471.5 L1901.2 476.5 L1898.8 472.8Z" fill="#aad3df"/>
<g stroke="#e2f0f5" stroke-width="4.2" stroke-linecap="round">
<line x1="1921.7" y1="214.2" x2="1927.2" y2="214.2"/>
<line x1="1913.9" y1="218.0" x2="1926.1" y2="218.0"/>
<line x1="1912.8" y1="222.2" x2="1927.2" y2="222.2"/>
<line x1="1909.4" y1="226.1" x2="1927.2" y2="226.1"/>
<line x1="1914.4" y1="230.3" x2="1941.1" y2="230.3"/>
<line x1="1911.7" y1="234.2" x2="1951.0" y2="234.2"/>
<line x1="1908.9" y1="238.3" x2="1960.0" y2="238.3"/>
<line x1="1909.4" y1="242.2" x2="1960.6" y2="242.2"/>
<line x1="1910.6" y1="246.1" x2="1940.0" y2="246.1"/>
<line x1="1945.6" y1="246.1" x2="1966.7" y2="246.1"/>
<line x1="1902.2" y1="250.3" x2="1940.0" y2="250.3"/>
<line x1="1955.6" y1="250.3" x2="1962.2" y2="250.3"/>
<line x1="1902.2" y1="254.2" x2="1945.6" y2="254.2"/>
<line x1="1903.3" y1="258.3" x2="1927.2" y2="258.3"/>
<line x1="1933.3" y1="258.3" x2="1953.9" y2="258.3"/>
<line x1="1912.8" y1="262.2" x2="1926.7" y2="262.2"/>
<line x1="1940.0" y1="262.2" x2="1956.7" y2="262.2"/>
<line x1="1951.7" y1="266.4" x2="1963.3" y2="266.4"/>
<line x1="1540.8" y1="302.3" x2="1551.3" y2="302.3"/>
<line x1="1538.8" y1="306.3" x2="1572.9" y2="306.3"/>
<line x1="1536.3" y1="310.4" x2="1573.3" y2="310.4"/>
<line x1="1535.8" y1="314.4" x2="1571.3" y2="314.4"/>
<line x1="1536.7" y1="318.3" x2="1567.9" y2="318.3"/>
<line x1="1540.8" y1="322.3" x2="1565.4" y2="322.3"/>
<line x1="1540.4" y1="326.3" x2="1562.9" y2="326.3"/>
<line x1="1538.8" y1="330.2" x2="1559.6" y2="330.2"/>
<line x1="1537.5" y1="334.2" x2="1558.8" y2="334.2"/>
<line x1="1536.3" y1="338.3" x2="1559.6" y2="338.3"/>
<line x1="1537.0" y1="342.3" x2="1560.8" y2="342.3"/>
<line x1="1539.2" y1="346.3" x2="1557.5" y2="346.3"/>
</g>
<g stroke="#a9c9d7" stroke-width="1.5">
<line x1="1921.7" y1="214.2" x2="1927.2" y2="214.2"/>
<line x1="1913.9" y1="218.0" x2="1926.1" y2="218.0"/>
<line x1="1912.8" y1="222.2" x2="1927.2" y2="222.2"/>
<line x1="1909.4" y1="226.1" x2="1927.2" y2="226.1"/>
<line x1="1914.4" y1="230.3" x2="1941.1" y2="230.3"/>
<line x1="1911.7" y1="234.2" x2="1951.0" y2="234.2"/>
<line x1="1908.9" y1="238.3" x2="1960.0" y2="238.3"/>
<line x1="1909.4" y1="242.2" x2="1960.6" y2="242.2"/>
<line x1="1910.6" y1="246.1" x2="1940.0" y2="246.1"/>
<line x1="1945.6" y1="246.1" x2="1966.7" y2="246.1"/>
<line x1="1902.2" y1="250.3" x2="1940.0" y2="250.3"/>
<line x1="1955.6" y1="250.3" x2="1962.2" y2="250.3"/>
<line x1="1902.2" y1="254.2" x2="1945.6" y2="254.2"/>
<line x1="1903.3" y1="258.3" x2="1927.2" y2="258.3"/>
<line x1="1933.3" y1="258.3" x2="1953.9" y2="258.3"/>
<line x1="1912.8" y1="262.2" x2="1926.7" y2="262.2"/>
<line x1="1940.0" y1="262.2" x2="1956.7" y2="262.2"/>
<line x1="1951.7" y1="266.4" x2="1963.3" y2="266.4"/>
<line x1="1540.8" y1="302.3" x2="1551.3" y2="302.3"/>
<line x1="1538.8" y1="306.3" x2="1572.9" y2="306.3"/>
<line x1="1536.3" y1="310.4" x2="1573.3" y2="310.4"/>
<line x1="1535.8" y1="314.4" x2="1571.3" y2="314.4"/>
<line x1="1536.7" y1="318.3" x2="1567.9" y2="318.3"/>
<line x1="1540.8" y1="322.3" x2="1565.4" y2="322.3"/>
<line x1="1540.4" y1="326.3" x2="1562.9" y2="326.3"/>
<line x1="1538.8" y1="330.2" x2="1559.6" y2="330.2"/>
<line x1="1537.5" y1="334.2" x2="1558.8" y2="334.2"/>
<line x1="1536.3" y1="338.3" x2="1559.6" y2="338.3"/>
<line x1="1537.0" y1="342.3" x2="1560.8" y2="342.3"/>
<line x1="1539.2" y1="346.3" x2="1557.5" y2="346.3"/>
</g>
<g stroke="#fff" stroke-opacity="0.13" stroke-width="1.4">
<line x1="544.4" y1="194" x2="544.4" y2="1420"/>
<line x1="800.4" y1="194" x2="800.4" y2="1420"/>
<line x1="1056.4" y1="194" x2="1056.4" y2="1420"/>
<line x1="1312.4" y1="194" x2="1312.4" y2="1420"/>
<line x1="1568.4" y1="194" x2="1568.4" y2="1420"/>
<line x1="1824.4" y1="194" x2="1824.4" y2="1420"/>
<line x1="2080.4" y1="194" x2="2080.4" y2="1420"/>
<line x1="2336.4" y1="194" x2="2336.4" y2="1420"/>
<line x1="370" y1="361.6" x2="2540" y2="361.6"/>
<line x1="370" y1="617.6" x2="2540" y2="617.6"/>
<line x1="370" y1="873.6" x2="2540" y2="873.6"/>
<line x1="370" y1="1129.6" x2="2540" y2="1129.6"/>
<line x1="370" y1="1385.6" x2="2540" y2="1385.6"/>
</g>
<g fill="none" stroke="#dfcde4" stroke-width="1.15" stroke-dasharray="4 3">
<path d="M370.0 380.2 L395.0 384.0 L420.0 399.0 L445.0 406.5 L465.0 414.0 L480.0 429.0 L505.0 437.8 L513.8 446.5 L515.0 554.0"/>
<path d="M513.8 554.0 L515.0 589.0 L545.0 611.5 L577.5 644.0 L587.5 666.5 L590.0 684.0 L582.5 739.0 L570.0 854.0 L562.5 914.0"/>
<path d="M568.4 860.0 L552.8 996.1 L537.2 1108.9 L512.0 1339.2"/>
<path d="M370.0 1129.5 L447.8 1121.4 L537.2 1108.9"/>
<path d="M920.3 1165.3 L895.1 1198.4 L879.5 1229.5 L875.6 1280.1 L860.1 1322.8 L836.7 1342.3 L801.7 1361.7 L790.1 1377.3 L766.7 1381.2 L764.8 1400.6"/>
<path d="M1198.4 1062.2 L1221.8 1097.3 L1245.1 1140.0 L1270.0 1175.0"/>
<path d="M1239.3 937.8 L1270.0 933.1"/>
<path d="M1010.0 334.0 L1035.0 344.0 L1060.0 354.0 L1085.0 361.5 L1105.0 349.0 L1110.0 339.0 L1105.0 330.2 L1120.0 322.8 L1160.0 319.0 L1210.0 322.8 L1235.0 304.0 L1250.0 284.0 L1235.0 266.5 L1232.5 244.0 L1237.5 219.0 L1227.5 194.0"/>
<path d="M1295.0 194.0 L1293.8 231.5 L1312.5 247.8 L1342.5 245.2 L1357.5 237.8 L1380.0 241.5 L1381.2 264.0 L1395.0 274.0 L1420.0 276.5 L1422.5 286.5 L1410.0 299.0 L1402.5 309.0 L1410.0 311.5 L1410.0 334.0 L1435.0 354.0 L1455.0 374.0 L1485.0 386.5 L1522.5 404.0 L1550.0 419.0 L1555.0 434.0 L1567.5 469.0 L1580.0 494.0 L1583.8 526.5"/>
<path d="M1615.0 194.0 L1612.5 214.0 L1572.5 219.0 L1575.0 251.5 L1557.5 259.0 L1552.5 301.5 L1547.5 354.0 L1552.5 369.0 L1547.5 384.0 L1562.5 394.0 L1565.0 416.5 L1550.0 419.0"/>
<path d="M1297.5 591.5 L1307.5 616.5 L1317.5 651.5 L1332.5 694.0 L1365.0 721.5 L1395.0 746.5 L1420.0 764.0 L1435.0 774.0"/>
<path d="M1395.0 746.5 L1380.0 779.0"/>
<path d="M1435.0 774.0 L1450.0 759.0 L1465.0 729.0 L1475.0 709.0 L1467.5 694.0 L1462.5 669.0"/>
<path d="M1485.0 729.0 L1517.5 756.5 L1550.0 761.5 L1580.0 771.5 L1595.0 764.0"/>
<path d="M1517.5 756.5 L1500.0 784.0 L1470.0 814.0"/>
<path d="M1232.5 735.2 L1255.0 734.0 L1275.0 724.0 L1292.5 714.0 L1290.0 701.5 L1285.0 691.5 L1295.0 689.0 L1292.5 676.5 L1322.5 670.2 L1317.5 651.5"/>
<path d="M1381.2 780.0 L1357.5 827.5 L1342.5 922.5 L1330.0 925.0"/>
<path d="M1342.5 922.5 L1492.5 990.0 L1501.2 995.0 L1495.0 1048.8"/>
<path d="M1500.0 785.0 L1470.0 812.5 L1477.5 880.0 L1492.5 990.0"/>
<path d="M1221.2 1100.0 L1322.5 1260.0 L1340.0 1267.5"/>
<path d="M2510.0 216.5 L2410.0 236.5 L2330.0 274.0 L2307.5 309.0 L2305.0 344.0 L2312.5 404.0 L2332.5 454.0 L2325.0 494.0 L2300.0 544.0 L2265.0 579.0 L2240.0 586.5"/>
<path d="M471.0 1356.0 L470.0 1420.0"/>
</g>
<g fill="none" stroke-linejoin="round" stroke-linecap="round">
<path d="M370.0 221.5 L470.0 261.5 L603.8 317.8 L650.0 337.8" stroke="#f5b8a4" stroke-width="1"/>
<path d="M591.2 194.0 L602.5 224.0 L617.5 269.0 L632.5 299.0 L650.0 337.8 L682.5 369.0 L720.0 406.5 L742.5 434.0" stroke="#f5b8a4" stroke-width="1"/>
<path d="M395.0 201.5 L385.0 219.0 L370.0 226.5" stroke="#f5b8a4" stroke-width="1"/>
<path d="M603.8 317.8 L597.5 344.0 L602.5 381.5 L620.0 411.5 L635.0 444.0 L645.0 481.5 L657.5 514.0 L670.0 530.2 L706.2 532.8" stroke="#f5b8a4" stroke-width="1"/>
<path d="M632.5 299.0 L603.8 317.8" stroke="#f5b8a4" stroke-width="1"/>
<path d="M370.0 513.0 L389.0 530.0 L407.5 545.0 L420.0 557.5 L426.0 570.0 L435.0 590.0 L444.0 606.0" stroke="#ee8fa5" stroke-width="1.5"/>
<path d="M649.0 480.0 L595.0 512.5 L557.5 527.5 L526.0 554.0 L511.0 559.0 L476.0 572.5 L460.0 582.5 L451.0 589.0 L444.0 599.0 L440.0 606.0" stroke="#ee8fa5" stroke-width="1.5"/>
<path d="M370.0 631.0 L377.5 626.0 L391.0 624.0 L401.0 625.0 L411.0 619.0 L422.5 615.0 L431.0 609.0 L440.0 606.0" stroke="#ee8fa5" stroke-width="1.5"/>
<path d="M649.0 480.0 L670.0 465.2 L707.5 444.0 L745.0 430.2" stroke="#ee8fa5" stroke-width="1.5"/>
<path d="M745.0 430.2 L725.0 454.0 L707.5 476.5 L697.5 504.0 L692.5 526.5 L706.2 532.8" stroke="#ee8fa5" stroke-width="1.4"/>
<path d="M727.5 426.5 L745.0 430.2 L755.0 444.0" stroke="#ee8fa5" stroke-width="1.4"/>
<path d="M702.5 366.5 L720.0 389.0 L737.5 414.0 L745.0 430.2 L760.0 444.0 L780.0 450.2 L795.0 449.0" stroke="#ee8fa5" stroke-width="1.2"/>
<path d="M706.2 532.8 L732.5 541.5 L737.5 554.0" stroke="#f5b8a4" stroke-width="1"/>
<path d="M706.2 532.8 L670.0 530.2 L640.0 544.0 L620.0 554.0" stroke="#f5b8a4" stroke-width="1"/>
<path d="M692.5 509.0 L715.0 506.5 L725.0 519.0 L722.5 539.0 L706.2 542.8" stroke="#f5b8a4" stroke-width="1"/>
<path d="M866.2 194.0 L875.0 209.0 L895.0 244.0 L920.0 269.0 L945.0 294.0 L977.5 314.0 L1010.0 336.5" stroke="#f5b8a4" stroke-width="1"/>
<path d="M413.0 563.0 L421.0 570.0 L424.0 580.0 L431.0 592.0 L438.0 603.0" stroke="#ee8fa5" stroke-width="1.2"/>
<path d="M441.0 572.0 L445.0 580.0 L443.0 590.0 L447.0 598.0" stroke="#ee8fa5" stroke-width="1.2"/>
<path d="M430.0 591.5 L445.0 602.8 L457.5 591.5" stroke="#ee8fa5" stroke-width="1.4"/>
<path d="M441.2 572.8 L445.0 581.5 L437.5 594.0 L452.5 607.8" stroke="#ee8fa5" stroke-width="1.4"/>
<path d="M432.5 601.5 L450.0 589.0" stroke="#ee8fa5" stroke-width="1.4"/>
<path d="M430.0 606.5 L437.5 612.8 L450.0 609.0 L457.5 599.0" stroke="#ee8fa5" stroke-width="1.4"/>
<path d="M525.0 554.0 L550.0 560.2 L575.0 559.0 L590.0 554.0" stroke="#f5b8a4" stroke-width="1"/>
<path d="M452.5 607.8 L485.0 641.5 L487.5 654.0 L480.0 674.0 L467.5 706.5 L457.5 729.0 L465.0 761.5 L457.5 816.5 L440.0 854.0 L397.5 914.0" stroke="#f5b8a4" stroke-width="1"/>
<path d="M485.0 641.5 L497.5 652.8 L545.0 644.5 L577.5 650.2 L627.5 649.8 L652.5 656.0 L882.5 655.2" stroke="#f5b8a4" stroke-width="1"/>
<path d="M487.5 661.5 L497.5 652.8" stroke="#f5b8a4" stroke-width="1"/>
<path d="M392.5 626.5 L370.0 664.0" stroke="#f5b8a4" stroke-width="1"/>
<path d="M683.8 554.0 L670.0 569.0 L660.0 601.5 L658.8 631.5 L661.2 655.2" stroke="#f5b8a4" stroke-width="1"/>
<path d="M740.0 554.0 L750.0 565.2 L770.0 571.5 L795.0 586.5 L810.0 589.0 L812.5 604.0 L832.5 624.0 L855.0 634.0 L865.0 650.2 L882.5 654.0 L902.5 669.0 L920.0 676.5 L945.0 676.5 L970.0 670.2 L1010.0 660.2" stroke="#f5b8a4" stroke-width="1"/>
<path d="M1142.5 626.5 L1160.0 639.0 L1185.0 646.5 L1215.0 650.2 L1250.0 647.8 L1265.0 647.0" stroke="#ee8fa5" stroke-width="1.6"/>
<path d="M1097.5 671.5 L1078.8 697.8 L1085.0 729.0 L1088.8 755.2" stroke="#f5b8a4" stroke-width="1"/>
<path d="M1010.0 661.5 L1047.5 664.0 L1097.5 660.2 L1135.0 649.0 L1160.0 639.0" stroke="#f5b8a4" stroke-width="1"/>
<path d="M1265.0 647.0 L1285.0 649.0 L1317.5 649.0 L1340.0 636.5 L1355.0 641.5" stroke="#f5b8a4" stroke-width="1"/>
<path d="M1322.5 564.0 L1330.0 591.5 L1340.0 619.0 L1360.0 654.0 L1385.0 684.0 L1410.0 699.0 L1435.0 704.0 L1467.5 706.5 L1490.0 710.2 L1520.0 707.8" stroke="#ee8fa5" stroke-width="1.5"/>
<path d="M1325.0 579.0 L1337.5 611.5 L1352.5 636.5 L1372.5 659.0 L1395.0 677.8 L1420.0 687.8 L1450.0 697.8 L1480.0 702.8" stroke="#f5b8a4" stroke-width="1"/>
<path d="M1272.5 671.5 L1282.5 704.0 L1305.0 719.0 L1332.5 747.8 L1360.0 756.5 L1385.0 774.0 L1410.0 779.0 L1430.0 781.5 L1448.8 775.2 L1457.5 754.0 L1475.0 734.0 L1482.5 726.5 L1485.0 711.5" stroke="#f5b8a4" stroke-width="1"/>
<path d="M1487.5 761.5 L1500.0 784.0 L1517.5 791.5 L1525.0 799.0" stroke="#f5b8a4" stroke-width="1"/>
<path d="M1520.0 714.0 L1517.5 731.5 L1537.5 741.5 L1560.0 761.5 L1580.0 776.5 L1610.0 809.0" stroke="#f5b8a4" stroke-width="1"/>
<path d="M1407.5 780.0 L1430.0 785.0 L1432.5 805.0 L1425.0 830.0 L1427.5 862.5 L1412.5 887.5 L1405.0 920.0 L1396.2 950.0 L1397.5 972.5 L1385.0 1002.5 L1355.0 1025.0 L1342.5 1035.0 L1330.0 1055.0" stroke="#f5b8a4" stroke-width="1"/>
<path d="M1272.5 194.0 L1270.0 219.0 L1278.8 234.0 L1272.5 244.0 L1285.0 274.0 L1310.0 294.0 L1313.8 314.0 L1321.2 326.5 L1316.2 349.0" stroke="#f5b8a4" stroke-width="1"/>
<path d="M1316.2 349.0 L1332.5 334.0 L1372.5 326.5 L1402.5 319.0" stroke="#f5b8a4" stroke-width="1"/>
<path d="M1372.5 326.5 L1385.0 344.0 L1390.0 374.0 L1385.0 394.0 L1392.5 411.5 L1401.2 425.2" stroke="#f5b8a4" stroke-width="1"/>
<path d="M1010.0 339.0 L1047.5 354.0 L1085.0 369.0 L1110.0 386.5 L1130.0 394.0 L1150.0 409.0 L1172.5 416.5 L1195.0 404.0 L1227.5 389.0 L1232.5 376.5 L1247.5 372.8" stroke="#f5b8a4" stroke-width="1"/>
<path d="M1068.8 211.5 L1075.0 199.0 L1070.0 194.0" stroke="#f5b8a4" stroke-width="1"/>
<path d="M2227.5 194.0 L2225.0 214.0 L2200.0 226.5 L2182.5 279.0 L2125.0 326.5 L2110.0 324.0 L2075.0 344.0 L2032.5 366.5 L2020.0 379.0 L2020.0 391.5 L2007.5 406.5 L2015.0 429.0 L2012.5 444.0 L2020.0 454.0 L2010.0 466.5 L1975.0 464.0 L1922.5 464.0 L1900.0 481.5 L1892.5 494.0 L1900.0 509.0 L1902.5 536.5 L1875.0 541.5 L1865.0 554.0" stroke="#f5b8a4" stroke-width="1"/>
<path d="M2225.0 214.0 L2235.0 251.5 L2256.2 285.2 L2257.5 299.0 L2242.5 309.0 L2230.0 346.5 L2225.0 369.0 L2230.0 406.5 L2225.0 444.0 L2245.0 469.0 L2256.2 499.0 L2255.0 516.5 L2262.5 554.0" stroke="#f5b8a4" stroke-width="1"/>
<path d="M2182.5 279.0 L2187.5 294.0 L2207.5 300.2 L2232.5 294.0 L2256.2 289.0" stroke="#f5b8a4" stroke-width="1"/>
<path d="M1805.0 531.5 L1825.0 540.2 L1900.0 537.8 L1962.5 536.5 L1987.5 526.5 L2010.0 526.5 L2015.0 519.0 L2040.0 519.0 L2055.0 526.5 L2062.5 539.0 L2112.5 529.0 L2137.5 530.2 L2175.0 519.0 L2212.5 506.5 L2255.0 500.2" stroke="#f5b8a4" stroke-width="1"/>
<path d="M2262.0 554.0 L2275.0 564.0 L2292.5 581.5" stroke="#f5b8a4" stroke-width="1"/>
<path d="M2540.0 221.5 L2500.0 244.0 L2460.0 294.0 L2420.0 339.0 L2400.0 364.0 L2380.0 394.0 L2377.5 424.0 L2400.0 454.0 L2427.5 494.0 L2415.0 529.0" stroke="#f5b8a4" stroke-width="1.2"/>
<path d="M2390.0 194.0 L2420.0 231.5 L2440.0 269.0 L2460.0 294.0" stroke="#f5b8a4" stroke-width="1"/>
<path d="M2420.0 231.5 L2400.0 309.0 L2365.0 349.0 L2360.0 384.0 L2355.0 414.0 L2375.0 444.0 L2410.0 494.0 L2415.0 529.0" stroke="#f5b8a4" stroke-width="1"/>
<path d="M2375.0 284.0 L2385.0 309.0 L2400.0 309.0" stroke="#f5b8a4" stroke-width="1"/>
<path d="M2292.5 581.5 L2315.0 569.0 L2350.0 554.0 L2390.0 536.5 L2415.0 529.0" stroke="#ee8fa5" stroke-width="1.5"/>
<path d="M2292.5 581.5 L2325.0 581.5 L2345.0 594.0 L2345.0 629.0 L2337.5 656.5" stroke="#f5b8a4" stroke-width="1"/>
<path d="M2415.0 529.0 L2400.0 544.0 L2402.5 564.0 L2375.0 594.0 L2345.0 599.0" stroke="#f5b8a4" stroke-width="1"/>
<path d="M2435.0 704.0 L2450.0 729.0 L2480.0 759.0 L2520.0 794.0 L2540.0 801.5" stroke="#f5b8a4" stroke-width="1"/>
<path d="M2457.5 740.0 L2477.5 760.0 L2505.0 785.0 L2540.0 777.5" stroke="#f5b8a4" stroke-width="1"/>
<path d="M2470.0 847.5 L2490.0 860.0 L2515.0 847.5 L2540.0 840.0" stroke="#f5b8a4" stroke-width="1"/>
<path d="M2490.0 860.0 L2515.0 885.0 L2540.0 910.0" stroke="#f5b8a4" stroke-width="1"/>
<path d="M370.0 1313.1 L405.0 1315.1 L432.2 1303.4 L463.3 1292.5 L478.9 1303.4 L478.1 1346.2 L473.1 1355.9 L482.8 1377.3 L490.6 1400.6" stroke="#f5b8a4" stroke-width="1"/>
<path d="M432.2 860.0 L412.8 891.1 L389.4 922.2 L370.0 965.0" stroke="#f5b8a4" stroke-width="1"/>
<path d="M700.6 1400.6 L698.7 1377.3 L712.3 1361.7 L727.8 1326.7 L743.4 1326.7 L774.5 1311.2 L793.9 1309.2 L821.2 1280.1 L840.6 1268.4 L875.6 1248.9 L900.9 1232.6 L922.3 1236.5 L953.4 1245.0 L969.0 1264.5 L970.9 1274.2" stroke="#f5b8a4" stroke-width="1"/>
<path d="M945.6 1420.1 L930.1 1389.0 L910.6 1361.7 L914.5 1342.3 L930.1 1318.9 L934.0 1303.4 L953.4 1280.1 L970.9 1274.2 L1015.6 1263.7 L1031.2 1283.9 L1048.7 1303.4 L1070.1 1289.8 L1109.0 1289.8" stroke="#f5b8a4" stroke-width="1"/>
<path d="M1270.0 1098.0 L1225.7 1099.2 L1190.7 1105.0 L1163.4 1132.3 L1136.2 1151.7 L1114.8 1182.8 L1110.9 1210.0 L1107.0 1248.9 L1110.9 1289.8 L1114.8 1322.8 L1120.6 1346.2 L1116.0 1350.8" stroke="#f5b8a4" stroke-width="1"/>
<path d="M1142.5 626.2 L1151.2 628.8 L1161.2 626.2 L1167.5 620.0 L1170.0 607.5 L1178.8 592.5 L1195.0 578.8 L1207.5 567.5 L1220.0 555.0 L1226.2 545.0 L1236.2 535.0 L1245.0 525.0 L1255.0 517.5 L1270.0 506.2 L1282.5 500.0 L1287.5 495.0 L1291.2 482.5 L1293.8 470.0" stroke="#ee8fa5" stroke-width="1.5"/>
<path d="M1151.2 632.5 L1170.0 613.8 L1195.0 582.5 L1215.0 565.0 L1232.5 550.0 L1245.0 537.5 L1257.5 523.8 L1276.2 503.8 L1285.0 498.8" stroke="#ee8fa5" stroke-width="1.3"/>
<path d="M1226.2 545.0 L1232.5 557.5 L1242.5 573.8 L1251.2 588.8 L1257.5 601.2 L1266.2 613.8 L1270.0 626.2 L1271.2 636.2 L1266.2 647.5" stroke="#ee8fa5" stroke-width="1.4"/>
<path d="M1151.2 630.0 L1182.5 628.8 L1207.5 626.2 L1232.5 620.0 L1263.8 612.5" stroke="#ee8fa5" stroke-width="1.3"/>
<path d="M1151.2 630.0 L1157.5 638.8 L1165.0 645.0 L1176.2 650.0" stroke="#ee8fa5" stroke-width="1.3"/>
<path d="M1157.5 636.2 L1182.5 645.0 L1220.0 650.0" stroke="#ee8fa5" stroke-width="1.2"/>
<path d="M1238.8 540.0 L1257.5 542.5 L1276.2 550.0 L1288.8 560.0 L1297.5 570.0 L1305.0 580.0 L1315.0 576.2 L1322.5 575.0" stroke="#ee8fa5" stroke-width="1.3"/>
<path d="M1238.8 537.5 L1257.5 541.2 L1282.5 541.2 L1307.5 538.8 L1320.0 540.0" stroke="#ee8fa5" stroke-width="1.2"/>
<path d="M1232.5 550.0 L1242.5 545.0 L1251.2 535.0 L1257.5 523.8" stroke="#ee8fa5" stroke-width="1.2"/>
<path d="M1320.0 507.5 L1321.2 532.5 L1320.0 556.2 L1322.5 576.2 L1327.5 588.8 L1335.0 605.0 L1340.0 620.0 L1348.8 632.5 L1357.5 645.0 L1362.5 650.0" stroke="#ee8fa5" stroke-width="1.3"/>
<path d="M1207.5 588.8 L1220.0 577.5 L1232.5 568.8 L1245.0 557.5 L1251.2 547.5" stroke="#f5b8a4" stroke-width="1"/>
<path d="M1173.8 632.5 L1188.8 607.5 L1201.2 586.2 L1207.5 588.8 L1210.0 595.0 L1207.5 613.8 L1201.2 630.0 L1182.5 647.5" stroke="#f5b8a4" stroke-width="1"/>
<path d="M1245.0 550.0 L1247.5 560.0 L1251.2 566.2 L1263.8 570.0 L1270.0 577.5 L1267.5 587.5 L1257.5 595.0" stroke="#f5b8a4" stroke-width="1"/>
<path d="M1278.8 555.0 L1272.5 570.0 L1268.8 578.8" stroke="#f5b8a4" stroke-width="1"/>
<path d="M1182.5 601.2 L1207.5 595.0" stroke="#f5b8a4" stroke-width="1"/>
<path d="M1295.0 588.8 L1307.5 591.2 L1320.0 590.0 L1327.5 588.8" stroke="#f5b8a4" stroke-width="1"/>
<path d="M1167.5 642.5 L1195.0 632.5 L1220.0 626.2 L1245.0 620.0 L1270.0 611.2" stroke="#f5b8a4" stroke-width="1"/>
<path d="M1287.5 495.0 L1286.2 510.0 L1288.8 526.2 L1285.0 540.0 L1282.5 555.0 L1287.5 560.0" stroke="#f5b8a4" stroke-width="1"/>
<path d="M1305.0 540.0 L1307.5 522.5 L1315.0 510.0 L1320.0 507.5" stroke="#f5b8a4" stroke-width="1"/>
<path d="M1263.8 527.5 L1276.2 535.0 L1281.2 541.2" stroke="#f5b8a4" stroke-width="1"/>
<path d="M815.6 526.6 L828.1 522.7 L845.3 526.6 L860.9 535.9 L867.2 546.9 L862.5 551.6 L846.9 559.4 L832.8 575.0 L823.4 587.5" stroke="#ee8fa5" stroke-width="1.2"/>
<path d="M815.6 526.6 L814.1 546.9 L817.2 565.6 L823.4 587.5" stroke="#f5b8a4" stroke-width="1"/>
<path d="M868.8 500.0 L871.9 515.6 L878.1 535.9 L887.5 545.3" stroke="#ee8fa5" stroke-width="1.2"/>
<path d="M860.9 539.1 L873.4 562.5 L881.2 570.3" stroke="#ee8fa5" stroke-width="1.2"/>
<path d="M862.5 551.6 L881.2 545.3 L890.6 543.8" stroke="#ee8fa5" stroke-width="1.2"/>
<path d="M882.0 500.0 L881.2 515.6 L885.2 531.2 L887.5 543.8 L884.4 562.5 L885.9 573.4" stroke="#f5b8a4" stroke-width="1"/>
<path d="M861.2 459.0 L866.2 481.5 L868.8 506.5 L872.5 531.5 L871.2 554.0" stroke="#ee8fa5" stroke-width="1.1"/>
</g>
<g fill="none" stroke="#a898c9" stroke-width="1.35" stroke-linejoin="round">
<path d="M1010.0 401.5 L1047.5 419.0 L1097.5 439.0 L1127.5 464.0 L1135.0 489.0 L1150.0 499.0 L1180.0 500.2 L1200.0 502.8 L1222.5 494.0 L1235.0 479.0 L1260.0 444.0 L1297.5 414.0 L1335.0 396.5 L1345.0 391.5 L1351.2 377.8 L1360.0 391.5 L1370.0 426.5 L1375.0 459.0 L1382.5 484.0 L1395.0 504.0 L1415.0 516.5 L1460.0 529.0 L1510.0 541.5 L1560.0 549.0"/>
<path d="M1560.0 548.1 L1616.2 550.3 L1692.2 561.6 L1756.9 578.4 L1794.8 584.6 L1813.1 584.1 L1830.0 578.4 L1834.2 571.4 L1872.2 571.4 L1886.2 558.2 L1925.6 564.4 L1934.1 560.2 L2007.2 571.4 L2024.1 559.3 L2071.9 567.2 L2098.6 553.7 L2130.9 555.4 L2142.2 546.1 L2168.9 550.9 L2190.0 542.4 L2223.8 537.7 L2240.6 548.9 L2246.2 558.8 L2237.8 584.1 L2243.4 603.8 L2260.3 608.0 L2280.0 603.8"/>
<path d="M1605.0 780.0 L1620.0 791.2 L1637.5 795.0 L1650.0 805.0 L1657.5 820.0 L1656.2 845.0 L1650.0 862.5 L1642.5 872.5 L1630.0 897.5 L1612.5 932.5 L1595.0 942.5 L1580.0 955.0 L1566.2 970.0 L1577.5 1005.0 L1580.0 1020.0 L1565.0 1037.5 L1550.0 1055.0 L1535.0 1065.0 L1522.5 1063.8 L1495.0 1048.8 L1476.2 1050.0 L1472.5 1080.0 L1465.0 1102.5 L1470.0 1140.0"/>
<path d="M1465.0 1100.0 L1470.0 1130.0 L1477.5 1155.0 L1467.5 1172.5 L1450.0 1182.5 L1420.0 1185.0 L1385.0 1195.0 L1366.2 1207.5 L1365.0 1225.0 L1358.8 1247.5 L1341.2 1267.5 L1345.0 1307.5 L1335.0 1320.0 L1312.5 1322.5 L1285.0 1323.8 L1243.8 1328.0 L1238.8 1340.0 L1220.0 1360.0 L1200.0 1370.0 L1182.5 1375.0 L1167.5 1372.5 L1157.5 1367.0 L1132.5 1366.2 L1112.5 1372.5 L1095.0 1380.0 L1085.0 1387.5 L1070.0 1393.0 L1032.5 1400.0 L985.0 1418.8"/>
<path d="M2279.7 601.3 L2285.8 608.9 L2295.0 621.1 L2301.1 651.7 L2313.4 682.3 L2328.6 699.1 L2362.3 709.8 L2391.3 715.9 L2392.8 706.7 L2398.9 697.5 L2402.0 685.3 L2414.2 673.1 L2450.9 671.6 L2450.9 639.5"/>
<path d="M2391.3 715.9 L2405.0 725.0 L2408.1 743.4 L2415.7 758.7 L2453.9 786.2 L2470.8 796.9 L2469.2 801.5 L2458.5 809.1 L2450.9 822.8 L2444.8 838.1 L2450.9 859.5 L2472.3 890.1 L2515.1 935.9 L2541.1 962.8"/>
<path d="M907.8 500.0 L902.3 515.6 L909.4 531.2 L912.5 546.9 L911.7 570.3 L909.4 587.5 L910.2 596.9 L871.1 607.0"/>
<path d="M910.2 596.9 L928.1 593.8 L933.6 607.8 L943.8 598.4 L956.2 592.2 L957.0 584.4"/>
<path d="M965.6 572.7 L971.9 570.3 L984.4 568.0 L986.7 560.9 L985.9 553.1 L995.3 537.5 L1006.2 532.8 L1018.8 539.1 L1025.0 550.0 L1025.8 559.4 L1039.1 568.8 L1043.8 579.7 L1045.3 587.5 L1056.2 590.6 L1065.6 600.0 L1070.3 609.4 L1089.1 617.2 L1106.2 614.1 L1128.1 600.0 L1159.4 571.9 L1182.8 554.7 L1190.6 539.1 L1196.9 523.4 L1200.0 515.6"/>
<path d="M1200.0 516.5 L1210.0 514.0 L1235.0 501.5 L1260.0 479.0 L1281.2 452.8 L1296.2 463.5"/>
<path d="M885.2 604.7 L873.4 629.7 L887.5 643.8"/>
<path d="M800.0 510.9 L814.1 515.6 L809.4 539.1 L804.7 565.6 L809.4 587.5 L815.6 595.3"/>
<path d="M1343.8 554.0 L1346.2 576.5 L1360.0 604.0 L1380.0 629.0 L1400.0 654.0 L1430.0 669.0 L1442.5 672.8 L1482.5 662.8 L1500.0 671.5 L1520.0 689.0 L1547.5 709.0 L1570.0 729.0 L1590.0 754.0 L1605.0 779.0"/>
<path d="M621.2 194.0 L670.0 234.0 L707.5 286.5 L725.0 274.0 L740.0 271.5"/>
<path d="M779.5 276.5 L782.0 286.5 L780.0 296.5 L772.5 304.0 L760.0 307.8 L745.0 306.5 L745.0 310.2 L765.0 339.0 L782.5 369.0 L787.5 401.5 L786.2 409.0"/>
<path d="M786.2 409.0 L800.0 399.5 L815.0 411.5 L825.0 439.0 L827.5 444.0 L820.0 459.0 L817.5 479.0 L822.5 501.5 L815.0 516.5 L795.0 510.2 L777.5 489.0 L770.0 464.0 L772.5 439.0 L777.5 419.0 L786.2 409.0"/>
<path d="M827.5 444.0 L840.0 434.0 L855.0 430.2 L875.0 437.8 L887.5 454.0 L905.0 469.0 L910.0 494.0 L906.2 500.0"/>
<path d="M786.2 194.0 L860.0 294.0 L920.0 339.0 L1010.0 400.2"/>
<path d="M795.0 510.2 L800.0 531.5 L806.2 554.0"/>
<path d="M1280.0 429.0 L1310.0 409.0 L1335.0 399.0 L1352.5 394.0 L1360.0 409.0 L1360.0 454.0 L1345.0 494.0 L1322.5 504.0 L1322.5 514.0"/>
<path d="M1322.5 504.0 L1340.0 501.5"/>
<circle cx="961" cy="573" r="5.5"/>
<circle cx="759" cy="265" r="20.5"/>
<circle cx="962" cy="502" r="21.0"/>
<circle cx="1127" cy="546" r="21.0"/>
<circle cx="946" cy="565" r="21.0"/>
<circle cx="1128" cy="546" r="2.0"/>
</g>
<g fill="none" stroke="#d4aad8" stroke-width="2" stroke-linejoin="round">
<path d="M1815.0 194.0 L1825.0 204.0 L1840.0 211.5 L1862.5 216.5 L1875.0 221.5 L1890.0 237.8 L1907.5 236.5 L1907.5 256.5 L1911.2 281.5 L1912.5 314.0 L1907.5 331.5 L1910.0 341.5 L1920.0 345.2 L1945.0 341.5 L1952.5 346.5 L1956.2 354.0 L1950.0 359.0 L1948.8 384.0 L1945.0 386.5 L1943.8 402.8 L1905.0 404.0 L1890.0 409.0 L1875.0 412.8 L1865.0 416.5 L1862.5 426.5 L1857.5 431.5 L1855.0 440.2 L1845.0 437.8 L1837.5 435.2 L1835.0 440.2 L1826.2 444.0 L1822.5 454.0 L1821.2 466.5 L1820.0 479.0 L1822.5 481.5 L1820.0 494.0 L1812.5 496.5 L1807.5 506.5 L1806.2 519.0 L1805.0 531.5 L1802.5 544.0 L1801.2 554.0"/>
<path d="M1801.0 554.0 L1796.2 564.4 L1794.8 584.1"/>
<path d="M370.0 1324.8 L412.8 1327.9 L447.8 1323.6 L471.1 1355.1 L486.7 1355.1 L512.0 1339.2 L525.6 1307.3 L578.1 1239.2 L663.6 1195.7 L813.4 1180.1 L926.2 1159.5 L1198.4 1062.2 L1258.7 867.8 L1254.8 860.0"/>
<path d="M926.2 1159.5 L994.2 1318.9 L992.3 1322.1 L998.1 1322.8 L1033.1 1400.6"/>
<path d="M887.5 639.0 L888.8 656.5 L977.5 775.2 L1010.0 779.0"/>
<path d="M1010.0 777.8 L1210.0 805.2 L1217.5 799.0 L1260.0 866.5 L1245.0 914.0"/>
<path d="M1217.5 799.0 L1220.0 754.0 L1235.0 724.0 L1242.5 709.0 L1251.2 701.5 L1246.2 686.5 L1242.5 675.2 L1250.0 669.0 L1262.5 666.5 L1275.0 665.2 L1290.0 662.8 L1286.2 647.8 L1270.0 647.0 L1272.5 629.0 L1270.0 614.0 L1267.5 604.0 L1272.5 596.5 L1272.5 579.0 L1280.0 571.5 L1285.0 569.0 L1290.0 574.0 L1292.5 586.5 L1297.5 591.5 L1300.0 581.5 L1310.0 576.5 L1320.0 575.2 L1322.5 569.0"/>
<path d="M817.5 596.5 L827.5 614.0 L842.5 622.8 L860.0 619.0 L870.0 607.8"/>
<path d="M525.0 194.0 L533.8 209.5 L600.0 209.5 L622.5 194.0"/>
<path d="M1297.5 464.0 L1305.0 466.5 L1306.2 479.0 L1303.8 494.0 L1307.5 506.5 L1313.8 507.8"/>
<path d="M2450.0 634.0 L2460.0 646.5 L2480.0 639.0 L2510.0 644.0 L2530.0 639.0 L2540.0 646.5"/>
<path d="M2500.0 214.0 L2507.5 206.5 L2520.0 204.0 L2540.0 205.0"/>
</g>
<g font-family="'DejaVu Sans',sans-serif" text-anchor="middle" stroke="#f2efe9" stroke-width="2" paint-order="stroke" stroke-opacity="0.7">
<text x="1447" y="207" font-size="9.5" fill="#555">جيرفت</text>
<text x="1763" y="239" font-size="9.5" fill="#555">خاش</text>
<text x="1716" y="357" font-size="9.5" fill="#555">ايرانشهر</text>
<text x="1315" y="345" font-size="11.4" fill="#555">بندرعباس</text>
<text x="604" y="331" font-size="9.5" fill="#555">النعيرية</text>
<text x="708" y="381" font-size="9.5" fill="#555">الجبيل</text>
<text x="752" y="419" font-size="11.4" fill="#555">الدمام</text>
<text x="706" y="528" font-size="11.4" fill="#555">الهفوف</text>
<text x="444" y="624" font-size="11.4" fill="#555">الرياض</text>
<text x="882" y="556" font-size="11.4" fill="#555">الدوحة</text>
<text x="1222" y="539" font-size="11.4" fill="#555">دبي</text>
<text x="1272" y="518" font-size="9.5" fill="#555">أم القيوين</text>
<text x="1319" y="570" font-size="9.5" fill="#555">الفجيرة</text>
<text x="1142" y="616" font-size="11.4" fill="#555">أبوظبي</text>
<text x="1266" y="662" font-size="11.4" fill="#555">العين</text>
<text x="1419" y="684" font-size="9.5" fill="#555">السويق</text>
<text x="1488" y="698" font-size="9.5" fill="#555">السيب</text>
<text x="1520" y="727" font-size="12.3" fill="#555">مسقط</text>
<text x="1483" y="725" font-size="9.5" fill="#555">بدبد</text>
<text x="1470" y="752" font-size="9.5" fill="#555">سمائل</text>
<text x="1428" y="773" font-size="9.5" fill="#555">نزوى</text>
<text x="1449" y="790" font-size="9.5" fill="#555">إزكي</text>
<text x="1334" y="745" font-size="9.5" fill="#555">عبري</text>
<text x="1610" y="823" font-size="9.5" fill="#555">صور</text>
<text x="1115" y="1361" font-size="9.5" fill="#555">صلالة</text>
<text x="1710" y="563" font-size="9.5" fill="#555">جابهار</text>
<text x="1862" y="568" font-size="9.5" fill="#555">گوادر</text>
<text x="1932" y="481" font-size="9.5" fill="#555">تربت</text>
<text x="2075" y="545" font-size="9.5" fill="#555">اورماڑا</text>
<text x="2255" y="282" font-size="9.5" fill="#555">خضدار</text>
<text x="2293" y="598" font-size="11.4" fill="#555">كراچی</text>
<text x="2416" y="527" font-size="11.4" fill="#555">حيدرآباد</text>
<text x="2472" y="514" font-size="9.5" fill="#555">ميرپورخاص</text>
<text x="2374" y="592" font-size="9.5" fill="#555">ٹھٹہ / ننو</text>
<text x="2360" y="391" font-size="9.5" fill="#555">دادو / دادو</text>
<text x="2400" y="327" font-size="11.4" fill="#555">لاڑکانہ</text>
<text x="2460" y="309" font-size="11.4" fill="#555">سكر</text>
<text x="2438" y="266" font-size="9.5" fill="#555">شكارپور</text>
<text x="2410" y="282" font-size="9.5" fill="#555">رتوديرو</text>
<text x="2421" y="219" font-size="9.5" fill="#555">جيكب</text>
<text x="2421" y="232" font-size="9.5" fill="#555">آباد</text>
<text x="1154" y="370" font-size="10" fill="#a98bb5">استان هرمزگان</text>
<text x="1731" y="267" font-size="10" fill="#a98bb5">استان سيستان</text>
<text x="1731" y="283" font-size="10" fill="#a98bb5">و بلوچستان</text>
<text x="843" y="587" font-size="10" fill="#a98bb5">جريان الباطنة</text>
<text x="1320" y="455" font-size="10" fill="#a98bb5">محافظة مسندم</text>
<text x="1281" y="498" font-size="10" fill="#a98bb5">رأس الخيمة</text>
<text x="1361" y="654" font-size="10" fill="#a98bb5">محافظة شمال</text>
<text x="1361" y="668" font-size="10" fill="#a98bb5">الباطنة</text>
<text x="1420" y="721" font-size="10" fill="#a98bb5">محافظة جنوب</text>
<text x="1420" y="735" font-size="10" fill="#a98bb5">الباطنة</text>
<text x="1295" y="811" font-size="10" fill="#a98bb5">محافظة الظاهرة</text>
<text x="1413" y="860" font-size="10" fill="#a98bb5">منطقة الداخلية</text>
<text x="1555" y="895" font-size="10" fill="#a98bb5">المنطقة الشرقية</text>
<text x="1337" y="1076" font-size="10" fill="#a98bb5">محافظة الوسطى</text>
<text x="1133" y="1241" font-size="10" fill="#a98bb5">محافظة ظفار</text>
<text x="618" y="1392" font-size="10" fill="#a98bb5">حضرموت</text>
<text x="897" y="1390" font-size="10" fill="#a98bb5">المهرة</text>
<text x="2451" y="477" font-size="10" fill="#a98bb5">سنڌ</text>
<text x="797" y="463" font-size="13" fill="#8d5a99">البحرين</text>
<text x="854" y="535" font-size="13" fill="#8d5a99">قطر</text>
<text x="1086" y="653" font-size="13" fill="#8d5a99">الإمارات العربية</text>
<text x="1086" y="669" font-size="13" fill="#8d5a99">المتحدة</text>
<text x="1397" y="1015" font-size="13" fill="#8d5a99">عمان</text>
<text x="2541" y="899" font-size="10" fill="#555" text-anchor="end" font-family="'Liberation Sans',sans-serif">Porban</text>
</g>
<g fill="#f2efe9" stroke="#777" stroke-width="1">
<circle cx="604" cy="318" r="2.2"/>
<circle cx="712" cy="367" r="2.2"/>
<circle cx="753" cy="424" r="2.2"/>
<circle cx="707" cy="532" r="2.2"/>
<circle cx="1315" cy="349" r="2.2"/>
<circle cx="1222" cy="546" r="2.2"/>
<circle cx="1266" cy="647" r="2.2"/>
<circle cx="1520" cy="709" r="2.2"/>
<circle cx="1419" cy="687" r="2.2"/>
<circle cx="1488" cy="701" r="2.2"/>
<circle cx="1610" cy="811" r="2.2"/>
<circle cx="1115" cy="1348" r="2.2"/>
<circle cx="1764" cy="242" r="2.2"/>
<circle cx="1716" cy="346" r="2.2"/>
<circle cx="1712" cy="540" r="2.2"/>
<circle cx="1865" cy="555" r="2.2"/>
<circle cx="1932" cy="468" r="2.2"/>
<circle cx="2075" cy="549" r="2.2"/>
<circle cx="2255" cy="285" r="2.2"/>
<circle cx="2439" cy="268" r="2.2"/>
<circle cx="2408" cy="284" r="2.2"/>
<circle cx="2421" cy="234" r="2.2"/>
<circle cx="2361" cy="394" r="2.2"/>
<circle cx="2474" cy="517" r="2.2"/>
<circle cx="2375" cy="594" r="2.2"/>
<circle cx="2293" cy="583" r="2.2"/>
<circle cx="2416" cy="531" r="2.2"/>
<circle cx="2460" cy="297" r="2.2"/>
<circle cx="2400" cy="310" r="2.2"/>
</g>
<circle cx="444" cy="607" r="3.2" fill="#f2efe9" stroke="#555" stroke-width="1"/><circle cx="444" cy="607" r="1.2" fill="#555"/>
<circle cx="882" cy="541" r="3.2" fill="#f2efe9" stroke="#555" stroke-width="1"/><circle cx="882" cy="541" r="1.2" fill="#555"/>
<circle cx="1142" cy="622" r="3.2" fill="#f2efe9" stroke="#555" stroke-width="1"/><circle cx="1142" cy="622" r="1.2" fill="#555"/>
<circle cx="1520" cy="709" r="3.2" fill="#f2efe9" stroke="#555" stroke-width="1"/><circle cx="1520" cy="709" r="1.2" fill="#555"/>
</svg>
   <!-- controls -->
   <div class="ctl" style="top:10px;height:120px">
    <svg style="top:0" width="40" height="40" viewBox="0 0 40 40"><path d="M13 20h14M20 13v14" stroke="#fff" stroke-width="3"/></svg>
    <svg style="top:40px" width="40" height="40" viewBox="0 0 40 40"><path d="M13 20h14" stroke="#fff" stroke-width="3"/></svg>
    <svg style="top:80px" width="40" height="40" viewBox="0 0 40 40"><path d="M27 12L12 19.500h7.500V27z" fill="#fff"/></svg>
   </div>
   <div class="ctl" style="top:140px;height:120px">
    <svg style="top:0" width="40" height="40" viewBox="0 0 40 40"><path d="M20 11l8 4-8 4-8-4z" fill="#fff"/><path d="M12 19.500l8 4 8-4M12 23.500l8 4 8-4" fill="none" stroke="#fff" stroke-width="1.800"/></svg>
    <svg style="top:40px" width="40" height="40" viewBox="0 0 40 40"><circle cx="20" cy="12.500" r="2.200" fill="#fff"/><rect x="18" y="17" width="4" height="10" rx="1.500" fill="#fff"/></svg>
    <svg style="top:80px" width="40" height="40" viewBox="0 0 40 40"><path d="M22 15h-8v12h12v-5" fill="none" stroke="#fff" stroke-width="2"/><path d="M18 22c0-5 3-7 7-7v-3l5 5-5 5v-3c-3 0-5 1-7 3z" fill="#fff"/></svg>
   </div>
   <div class="ctl l" style="top:270px;height:40px">
    <svg style="top:0" width="40" height="40" viewBox="0 0 40 40"><path d="M12 13h14v10h-6l-4 4v-4h-4z" fill="#fff"/><path d="M26 26h6M29 23v6" stroke="#fff" stroke-width="2"/></svg>
   </div>
   <div class="ctl l" style="top:320px;height:40px">
    <svg style="top:0" width="40" height="40" viewBox="0 0 40 40"><path d="M13 10v15l4-3.500 3 6 2.500-1.200-3-6H25z" fill="#fff"/><text x="24" y="30" font-size="11" font-weight="bold" fill="#fff" font-family="'Liberation Sans',sans-serif">?</text></svg>
   </div>
   <!-- scale -->
   <div class="abs" style="left:6px;top:1188px;width:88px;height:16px;background:rgba(255,255,255,.5);border:2px solid #777;border-top:0;font-size:11px;line-height:14px;padding-left:5px;color:#333">100 km</div>
   <div class="abs" style="left:6px;top:1204px;width:72px;height:10px;border:2px solid #777;border-bottom:0;border-top:0"></div>
   <!-- attribution -->
   <div class="abs" style="left:1911px;top:1209px;width:259px;height:16px;background:rgba(255,255,255,.8);font-size:11.2px;line-height:16px;padding-left:5px;white-space:nowrap;color:#333;border-radius:3px 0 0 0">© <span style="color:#0078a8">OpenStreetMap contributors</span> ♥ <span style="color:#6db05c">Make a Donation</span></div>
  </div>
  <!-- status bubble -->
  <div class="abs" style="left:0;top:1262px;width:840px;height:18px;background:#f2f2f2;border-top:1px solid #b4b4b4;border-right:1px solid #b4b4b4;border-radius:0 4px 0 0;font-size:12.1px;line-height:17px;padding-left:4px;color:#222">https://www.openstreetmap.org/export#</div>
 </div>
</div>

<!-- ===== Skitch annotations ===== -->
<div class="pinkbox" style="left:362px;top:131px;width:109px;height:71px"></div>
<div class="pinknum" style="left:489px;top:154px">1</div>
<div class="pinkbox" style="left:97px;top:399px;width:206px;height:46px"></div>
<div class="pinknum" style="left:323px;top:409px">2</div>
</body>
</html>
